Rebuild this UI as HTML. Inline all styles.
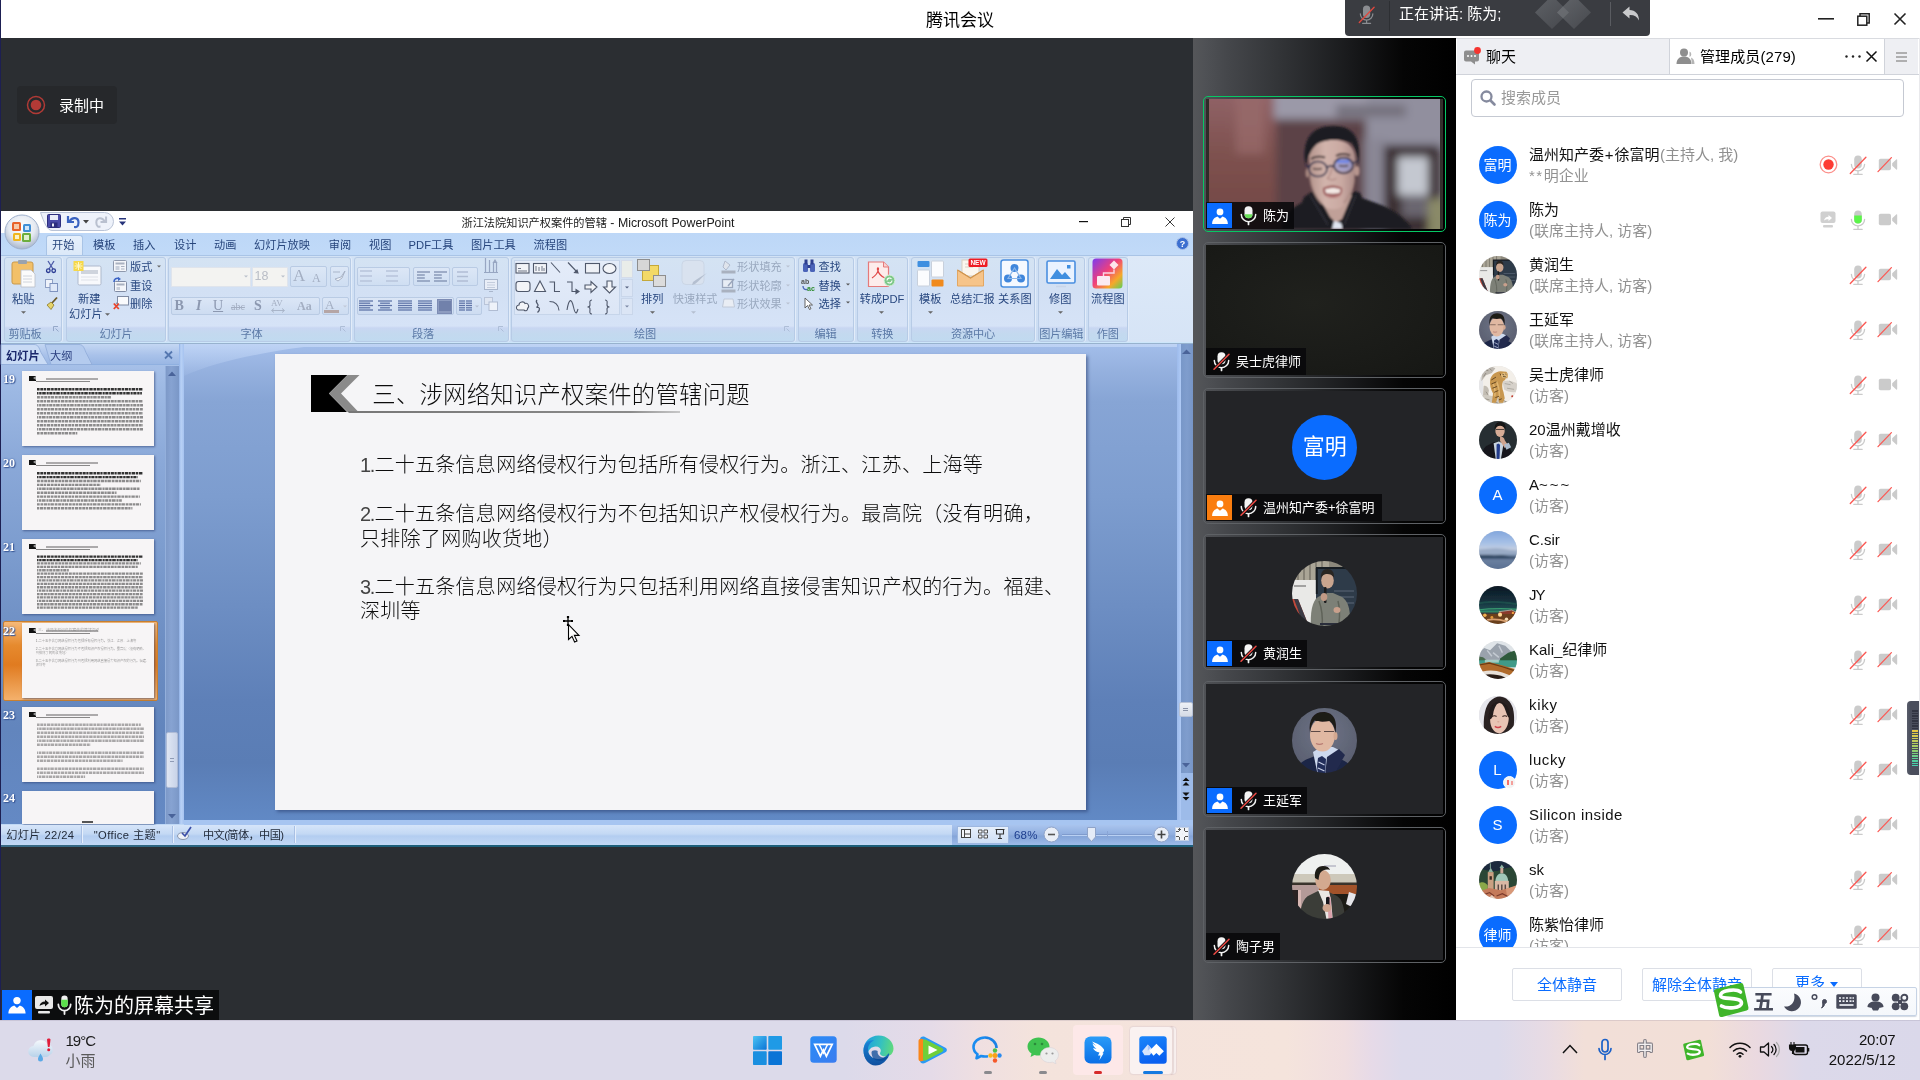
<!DOCTYPE html>
<html lang="zh-CN">
<head>
<meta charset="utf-8">
<title>腾讯会议</title>
<style>

*{box-sizing:border-box;margin:0;padding:0}
html,body{width:1920px;height:1080px;overflow:hidden;background:#2b2e32}
body{font-family:"Liberation Sans","Noto Sans CJK SC",sans-serif;font-size:14px;color:#000}
#root{position:relative;width:1920px;height:1080px;overflow:hidden;background:#2b2e32;will-change:transform}
.abs{position:absolute}
.t{position:absolute;white-space:nowrap;line-height:1}
svg{position:absolute;overflow:visible}
/* title bar */
#titlebar{position:absolute;left:0;top:0;width:1920px;height:38px;background:#fff}
#edge{position:absolute;left:0;top:0;width:1px;height:1020px;background:#1d1f52}
#speak{position:absolute;left:1345px;top:0;width:305px;height:35.5px;background:#3a3c41;border-radius:0 0 4px 4px}
#rec{position:absolute;left:17px;top:86px;width:100px;height:38px;background:#26282b;border-radius:4px}
/* share label */
#share{position:absolute;left:2px;top:990px;width:217px;height:30px;background:#0c0d0e}
#share .ub{position:absolute;left:0;top:0;width:30px;height:30px;background:#0a6cff}

#ppt{position:absolute;left:0;top:0;width:1193px;height:1080px}
.pf{font-size:11.2px}
.grp{position:absolute;top:257px;height:85px;border:1px solid #b7cbe6;border-radius:3px;box-shadow:1px 0 0 #e2ecf9;background:linear-gradient(#d4e3f3 0,#d2e0f4 40%,#d6e3f7 68px,#c8d6f2 70px,#c3d9ef 76px,#c1daf0 100%)}
.grp i{white-space:nowrap;letter-spacing:-.2px;position:absolute;left:0;right:0;bottom:-2px;height:17px;font-style:normal;text-align:center;font-size:11.2px;line-height:17px;color:#5b79a6}
.thumb{position:absolute;left:22px;width:132px;background:#f7f5f6;box-shadow:1px 1px 2px rgba(40,60,110,.6)}
.tn{position:absolute;left:3px;font-family:"Liberation Serif","Noto Serif CJK SC",serif;font-weight:bold;font-size:12px;line-height:12px;color:#fff;text-shadow:0 0 2px #3b5998,1px 1px 1px #3b5998}
.tl{position:absolute;height:1px;background:#555}
.slide-t{font-weight:300;color:#0c0c0c}
.dg{color:#444;letter-spacing:-1.3px;margin-right:.3px}

#vstrip{position:absolute;left:1193px;top:38px;width:263px;height:982px;background:linear-gradient(90deg,#555659 0,#505256 4%,#45474b 13%,#303235 35%,#18191b 60%,#050505 80%,#000 100%)}
.tile{position:absolute;left:1203px;width:243px;height:136px;border:1px solid #5e6165;border-radius:5px}
.tile .in{position:absolute;left:2px;top:2px;right:2px;bottom:2px;background:#232427;overflow:hidden}
.tile .lab{position:absolute;left:2px;bottom:2px;height:27.5px;background:rgba(8,8,10,.88);color:#fff;font-size:13px;line-height:27px;white-space:nowrap}
.tile .ub{position:absolute;left:1px;top:1.5px;width:25px;height:25px}
.av{position:absolute;border-radius:50%;overflow:hidden}

#panel{position:absolute;left:1456px;top:38px;width:464px;height:982px;background:#fff;overflow:hidden}
.row{position:absolute;left:0;width:464px;height:55px}
.row .a{position:absolute;left:22.500px;top:8.500px;width:38px;height:38px;border-radius:50%;overflow:hidden;background:#0a6cff;color:#fff;text-align:center;line-height:38px;font-size:14px;white-space:nowrap}
.row .n{position:absolute;left:73px;top:7px;font-size:15px;line-height:20px;color:#111;white-space:nowrap}
.row .n b{font-weight:normal;color:#8f8f8f}
.row .s{position:absolute;left:73px;top:28px;font-size:15px;line-height:20px;color:#929292;white-space:nowrap}
.btn{position:absolute;top:930px;height:33px;border:1px solid #dcdfe6;border-radius:2px;background:#fff;color:#0a6cff;font-size:15px;line-height:31px;text-align:center;white-space:nowrap}

#task{position:absolute;left:0;top:1020px;width:1920px;height:60px;background:linear-gradient(90deg,#dcdaea 0,#dcdaea 44%,#e5dbe8 48.5%,#efdfe1 51%,#f4e3dc 54%,#f5e4dc 67%,#f0dee0 70%,#e6dae8 71.5%,#dddaeb 73%,#dcdaeb 78%,#e8dbe4 80.5%,#f2dfd8 82.5%,#f2dfd7 89%,#ead9e0 91.5%,#dcd9ea 94%,#dad8ea 100%);box-shadow:inset 0 1px 0 rgba(120,110,140,.18)}
#ime{position:absolute;left:1727px;top:987px;width:190px;height:29px;background:linear-gradient(#fbfcfe,#f4f7fb);border:1px solid #c6d3e5;border-radius:2px;box-shadow:0 1px 1px rgba(120,140,170,.35)}
.ti{position:absolute;top:1035px;width:30px;height:30px}

</style>
</head>
<body>
<div id="root">

<div id="titlebar">
  <div class="t" style="left:926px;top:12px;font-size:17px;color:#000">腾讯会议</div>
  <svg style="left:1818px;top:18px" width="16" height="2" viewBox="0 0 16 2"><rect width="16" height="1.6" fill="#222"/></svg>
  <svg style="left:1857px;top:13px" width="13" height="13" viewBox="0 0 13 13"><path d="M3 3V0.8h9.2V10H10" fill="none" stroke="#222" stroke-width="1.5"/><rect x="0.8" y="3.2" width="9" height="9" fill="none" stroke="#222" stroke-width="1.5"/></svg>
  <svg style="left:1894px;top:13px" width="12" height="12" viewBox="0 0 12 12"><path d="M0.5 0.5L11.5 11.5M11.5 0.5L0.5 11.5" stroke="#222" stroke-width="1.6"/></svg>
</div>
<div id="speak">
  <svg style="left:14.4px;top:4.5px" width="15.2" height="19.0" viewBox="0 0 16 20" ><rect x="4.2" y="0.6" width="7.6" height="13" rx="3.8" fill="#8b8d91"/><path d="M1.4 9.300a6.600 6.600 0 0 0 13.200 0" fill="none" stroke="#8b8d91" stroke-width="1.300" stroke-linecap="round"/><path d="M8 16.200v3M3.800 19.300h8.400" fill="none" stroke="#8b8d91" stroke-width="1.300" stroke-linecap="round"/><path d="M0.300 18.400L15.900 2.300" stroke="#e0483f" stroke-width="1.400" stroke-linecap="round"/></svg>
  <div class="abs" style="left:44px;top:1px;width:1px;height:30px;background:#2d2f33"></div>
  <div class="t" style="left:54px;top:6px;font-size:15px;color:#fff">正在讲话: 陈为;</div>
  <svg style="left:188px;top:0" width="62" height="30" viewBox="0 0 62 30"><defs><linearGradient id="wm" x1="0" y1="0" x2="1" y2="1"><stop offset="0" stop-color="#63666b"/><stop offset="1" stop-color="#47494e"/></linearGradient></defs><path d="M2 12.500L14.500 0h9L36 12.500 19 29z" fill="url(#wm)" opacity=".85"/><path d="M24 12.500L36.500 0h9L58 12.500 41 29z" fill="url(#wm)" opacity=".95"/><path d="M24 12.500l6-6 6 6-6 5.800z" fill="#6d7075" opacity=".7"/></svg>
  <div class="abs" style="left:265px;top:2px;width:1px;height:24px;background:#5a5c61"></div>
  <svg style="left:277px;top:6px" width="18" height="16" viewBox="0 0 18 16"><path d="M7.5 0.500L0.5 6.500l7 6V9c4.5-.2 7.5 1.5 9.5 5.500C17 8 13.5 4.2 7.5 4z" fill="#c9cacc"/></svg>
</div>
<div id="rec">
  <svg style="left:9px;top:9px" width="20" height="20" viewBox="0 0 20 20"><circle cx="10" cy="10" r="8.5" fill="none" stroke="#b03a36" stroke-width="1.5"/><circle cx="10" cy="10" r="5.3" fill="#b23a36"/></svg>
  <div class="t" style="left:42px;top:12px;font-size:15px;color:#fff">录制中</div>
</div>
<div id="share">
  <div class="ub"><svg style="left:3px;top:3px" width="24" height="24" viewBox="0 0 24 24" ><circle cx="12" cy="7.6" r="3.7" fill="#fff"/><path d="M3.4 20.6c0-4.6 2.6-7.2 5.8-8.1l2.8 2.4 2.8-2.4c3.200 .9 5.800 3.500 5.800 8.100z" fill="#fff"/></svg></div>
  <svg style="left:33px;top:5px" width="18" height="20" viewBox="0 0 18 20"><rect x="0" y="1" width="18" height="13" rx="2" fill="#e9e9e9"/><rect x="3" y="16" width="12" height="2.5" rx="1" fill="#e9e9e9"/><path d="M4.5 11c.5-3 2.5-4.5 5.5-4.500V4.500l4 3.5-4 3.500V9.300c-2.3 0-3.8.5-5.5 1.700z" fill="#111"/></svg>
  <svg style="left:54px;top:4px" width="17" height="22" viewBox="0 0 16 20"><rect x="5" y="1" width="6" height="11" rx="3" fill="#f0f0f0"/><path d="M5 5h6v4a3 3 0 0 1-6 0z" fill="#5be04b"/><path d="M2.2 9.500a5.8 5.8 0 0 0 11.6 0" fill="none" stroke="#f0f0f0" stroke-width="1.7" stroke-linecap="round"/><path d="M8 15.500v3" fill="none" stroke="#f0f0f0" stroke-width="1.7" stroke-linecap="round"/></svg>
  <div class="t" style="left:72px;top:6px;font-size:20px;color:#fff">陈为的屏幕共享</div>
</div>
<div id="edge"></div>

<div id="ppt">
<div class="abs " style="left:1px;top:211px;width:1192px;height:636px;background:#bfd8f5"></div>
<div class="abs " style="left:1px;top:211px;width:1192px;height:22px;background:#fff"></div>
<svg style="left:40px;top:212px" width="76" height="20" viewBox="0 0 76 20"><path d="M0.5 0.500H64.500a9 9 0 0 1 0 18H12C7 18.5 4 10 0.5 0.500z" fill="#eef2fa" stroke="#b9c3d6" stroke-width="1"/></svg>
<svg style="left:47px;top:214px" width="14" height="14" viewBox="0 0 14 14"><rect x="0.5" y="0.5" width="13" height="13" rx="1" fill="#4a4ba8" stroke="#2d2e7d"/><rect x="3" y="1" width="8" height="5" fill="#e9ecf8"/><rect x="3.5" y="8.5" width="7" height="5" fill="#2d2e7d"/><rect x="5" y="9.5" width="2" height="3" fill="#e9ecf8"/></svg>
<svg style="left:67px;top:215px" width="14" height="13" viewBox="0 0 14 13"><path d="M1 1v6h6" fill="none" stroke="#3a63c0" stroke-width="2.2"/><path d="M2.5 6.500C5 1.5 11.5 2 11.5 7.500S8 12 7 12" fill="none" stroke="#3a63c0" stroke-width="2.2"/></svg>
<svg style="left:83px;top:220px" width="6" height="4" viewBox="0 0 6 4"><path d="M0 0h6L3 3.500z" fill="#444"/></svg>
<svg style="left:94px;top:215px" width="13" height="13" viewBox="0 0 14 13"><path d="M13 1v6H7" fill="none" stroke="#b9c0cf" stroke-width="2.2"/><path d="M11.5 6.500C9 1.5 2.5 2 2.5 7.500S6 12 7 12" fill="none" stroke="#b9c0cf" stroke-width="2.2"/></svg>
<svg style="left:119px;top:218px" width="7" height="8" viewBox="0 0 7 8"><rect x="0" y="0" width="7" height="1.5" fill="#26337a"/><path d="M0 3.500h7L3.5 7.500z" fill="#26337a"/></svg>
<div class="t ptitle" style="left:498px;top:216.12px;width:200px;text-align:center;font-size:11.2px;line-height:14.56px;color:#1a1a1a;font-size:11.2px;width:400px;margin-left:-100px;letter-spacing:0px">浙江法院知识产权案件的管辖<span style="font-size:12.35px"> - Microsoft PowerPoint</span></div>
<svg style="left:1079px;top:221px" width="9" height="2" viewBox="0 0 9 2"><rect width="9" height="1.2" fill="#111"/></svg>
<svg style="left:1121px;top:217px" width="10" height="10" viewBox="0 0 10 10"><path d="M2.5 2.500V0.500h7v7h-2" fill="none" stroke="#333" stroke-width="1"/><rect x="0.5" y="2.5" width="7" height="7" fill="none" stroke="#333" stroke-width="1"/></svg>
<svg style="left:1165px;top:217px" width="10" height="10" viewBox="0 0 10 10"><path d="M0.5 0.500l9 9M9.5 0.500l-9 9" stroke="#222" stroke-width="0.9"/></svg>
<div class="abs " style="left:1px;top:233px;width:1192px;height:22px;background:linear-gradient(#bdd7f7,#c1daf8)"></div>
<div class="abs " style="left:45.5px;top:234.5px;width:37.0px;height:21.5px;background:linear-gradient(#e6f0fc,#dbe8f8);border:1px solid #a9c4e6;border-bottom:none;border-radius:3px 3px 0 0"></div>
<div class="t " style="left:52px;top:238.12px;font-size:11.2px;line-height:14.56px;color:#27457c;">开始</div>
<div class="t " style="left:93px;top:238.12px;font-size:11.2px;line-height:14.56px;color:#27457c;">模板</div>
<div class="t " style="left:133px;top:238.12px;font-size:11.2px;line-height:14.56px;color:#27457c;">插入</div>
<div class="t " style="left:174px;top:238.12px;font-size:11.2px;line-height:14.56px;color:#27457c;">设计</div>
<div class="t " style="left:214px;top:238.12px;font-size:11.2px;line-height:14.56px;color:#27457c;">动画</div>
<div class="t " style="left:254px;top:238.12px;font-size:11.2px;line-height:14.56px;color:#27457c;">幻灯片放映</div>
<div class="t " style="left:328.8px;top:238.12px;font-size:11.2px;line-height:14.56px;color:#27457c;">审阅</div>
<div class="t " style="left:369px;top:238.12px;font-size:11.2px;line-height:14.56px;color:#27457c;">视图</div>
<div class="t " style="left:408.6px;top:238.12px;font-size:11.2px;line-height:14.56px;color:#27457c;">PDF工具</div>
<div class="t " style="left:471px;top:238.12px;font-size:11.2px;line-height:14.56px;color:#27457c;">图片工具</div>
<div class="t " style="left:533.6px;top:238.12px;font-size:11.2px;line-height:14.56px;color:#27457c;">流程图</div>
<svg style="left:1176px;top:237px" width="13" height="13" viewBox="0 0 13 13"><circle cx="6.5" cy="6.5" r="6" fill="#3c6fd0" stroke="#a9c0e8" stroke-width="1"/><text x="6.5" y="10" font-size="9" font-weight="bold" fill="#fff" text-anchor="middle" font-family="Liberation Sans, sans-serif">?</text></svg>
<div class="abs " style="left:1px;top:255px;width:1192px;height:88px;background:linear-gradient(#d2e2f5,#cfdff4 60%,#c9dcf3);border-top:1px solid #a9c4e6"></div>
<div class="abs " style="left:1128px;top:256px;width:65px;height:87px;background:linear-gradient(#dde9f8,#d6e4f6)"></div>
<div class="grp" style="left:4px;width:58px"><i style="padding-right:16px">剪贴板</i></div>
<div class="grp" style="left:66px;width:100px"><i style="">幻灯片</i></div>
<div class="grp" style="left:168px;width:183px"><i style="padding-right:16px">字体</i></div>
<div class="grp" style="left:353.5px;width:155.0px"><i style="padding-right:16px">段落</i></div>
<div class="grp" style="left:511px;width:284px"><i style="padding-right:16px">绘图</i></div>
<div class="grp" style="left:797.5px;width:56.0px"><i style="">编辑</i></div>
<div class="grp" style="left:856.5px;width:51.5px"><i style="">转换</i></div>
<div class="grp" style="left:911px;width:124px"><i style="">资源中心</i></div>
<div class="grp" style="left:1038px;width:46.5px"><i style="">图片编辑</i></div>
<div class="grp" style="left:1087.5px;width:40.5px"><i style="">作图</i></div>
<svg style="left:4px;top:214px" width="36" height="36" viewBox="0 0 36 36"><defs><radialGradient id="orb" cx="50%" cy="35%" r="65%"><stop offset="0" stop-color="#ffffff"/><stop offset="0.6" stop-color="#e4e9f1"/><stop offset="1" stop-color="#a9b6cc"/></radialGradient></defs><circle cx="18" cy="18" r="17" fill="url(#orb)" stroke="#9fb0cc" stroke-width="1"/><rect x="8" y="8" width="9" height="9" rx="1.5" fill="#e8622a"/><rect x="10" y="10" width="5" height="5" fill="#f6c9a8"/><rect x="19" y="10" width="8" height="8" rx="1.5" fill="#3f8fd6"/><rect x="21" y="12" width="4" height="4" fill="#cfe4f8"/><rect x="9" y="19" width="8" height="8" rx="1.5" fill="#f0b51d"/><rect x="11" y="21" width="4" height="4" fill="#fdf1c3"/><rect x="18" y="19" width="9" height="9" rx="1.5" fill="#6cae3e"/><rect x="20" y="21" width="5" height="5" fill="#dff0cf"/></svg>
<svg style="left:11px;top:259px" width="26" height="29" viewBox="0 0 26 29"><rect x="1" y="3" width="21" height="22" rx="2" fill="#f2c069" stroke="#c9994a"/><rect x="7" y="1" width="9" height="4" rx="1" fill="#9aa2ad"/><path d="M10 11h10l4 4v13H10z" fill="#fbfbfb" stroke="#b9bec8" stroke-width="0.8"/><path d="M12 17h9M12 20h9M12 23h9" stroke="#d0d4dc" stroke-width="1"/></svg>
<div class="t " style="left:12px;top:292.12px;font-size:11.2px;line-height:14.56px;color:#28477f;">粘贴</div>
<svg style="left:21.0px;top:311.0px" width="5" height="3" viewBox="0 0 6 3"><path d="M0 0h6L3 3z" fill="#666"/></svg>
<svg style="left:46px;top:261px" width="10" height="12" viewBox="0 0 10 12"><path d="M2 0l5 8M8 0L3 8" stroke="#4d5ba8" stroke-width="1.3"/><circle cx="2.3" cy="9.700" r="1.800" fill="none" stroke="#2c3c94" stroke-width="1.300"/><circle cx="7.700" cy="9.700" r="1.800" fill="none" stroke="#2c3c94" stroke-width="1.300"/></svg>
<svg style="left:45px;top:279px" width="13" height="13" viewBox="0 0 13 13"><rect x="0.5" y="0.5" width="7" height="8" fill="#eef2fa" stroke="#8fa0c4"/><rect x="5" y="4.500" width="7.500" height="8" fill="#dfe8f8" stroke="#7f93bf"/></svg>
<svg style="left:46px;top:297px" width="12" height="13" viewBox="0 0 12 13"><path d="M11 0.500L6 6" stroke="#6b5a2a" stroke-width="1.800"/><path d="M1 8l4-3 3 3-3 4.500z" fill="#e6d36a" stroke="#8a7a2a" stroke-width="0.800"/></svg>
<svg style="left:53px;top:326px" width="6" height="6" viewBox="0 0 6 6"><path d="M0.5 5V0.500H5M2.500 2.500l3 3" fill="none" stroke="#8fa3c4" stroke-width="0.900"/></svg>
<svg style="left:73px;top:260px" width="29" height="27" viewBox="0 0 29 27"><rect x="5" y="6" width="23" height="19" rx="1.500" fill="#f8f9fc" stroke="#aeb9cc"/><rect x="8" y="10" width="17" height="4" fill="#cfd4dd"/><path d="M8 17h17M8 20h17" stroke="#dde1e8" stroke-width="1.200"/><rect x="0.500" y="1" width="10" height="10" fill="#f6d84a"/><path d="M5.500 2v8M1.500 6h8M2.500 3l6 6M8.500 3l-6 6" stroke="#fff7c8" stroke-width="1"/></svg>
<div class="t " style="left:78px;top:292.12px;font-size:11.2px;line-height:14.56px;color:#28477f;">新建</div>
<div class="t " style="left:69px;top:307.12px;font-size:11.2px;line-height:14.56px;color:#28477f;">幻灯片</div>
<svg style="left:104.5px;top:313.0px" width="5" height="3" viewBox="0 0 6 3"><path d="M0 0h6L3 3z" fill="#666"/></svg>
<div class="t " style="left:130px;top:260.12px;font-size:11.2px;line-height:14.56px;color:#28477f;">版式</div>
<div class="t " style="left:130px;top:278.82px;font-size:11.2px;line-height:14.56px;color:#28477f;">重设</div>
<div class="t " style="left:130px;top:296.82px;font-size:11.2px;line-height:14.56px;color:#28477f;">删除</div>
<svg style="left:156.5px;top:264.5px" width="4" height="3" viewBox="0 0 6 3"><path d="M0 0h6L3 3z" fill="#666"/></svg>
<svg style="left:113px;top:260px" width="14" height="12" viewBox="0 0 14 12"><rect x="0.5" y="0.500" width="13" height="11" rx="1" fill="#f4f6fa" stroke="#8e99ad"/><rect x="2.500" y="2.500" width="9" height="2" fill="#a9b1c0"/><rect x="2.500" y="6" width="4" height="4" fill="#c8cfdb"/><path d="M8 6.500h3.500M8 9h3.500" stroke="#a9b1c0"/></svg>
<svg style="left:113px;top:277px" width="15" height="15" viewBox="0 0 15 15"><rect x="1.500" y="4.500" width="12" height="10" rx="1" fill="#f4f6fa" stroke="#7f8ba3"/><rect x="3.500" y="6.500" width="8" height="2" fill="#a9b1c0"/><rect x="3.500" y="10" width="3.500" height="3" fill="#c8cfdb"/><path d="M1 5C1 2 3 0.800 6 1.500" fill="none" stroke="#3a62c4" stroke-width="1.600"/><path d="M5 0l3 2-3 2z" fill="#3a62c4"/></svg>
<svg style="left:113px;top:296px" width="16" height="14" viewBox="0 0 16 14"><rect x="4.500" y="0.500" width="11" height="8.500" fill="#fafbfd" stroke="#7f8ba3"/><path d="M4.500 6l-2 2.500" stroke="#7f8ba3"/><path d="M0.800 7.500l5 5.500M5.800 7.500l-5 5.500" stroke="#e8432a" stroke-width="1.800"/></svg>
<div class="abs " style="left:170.5px;top:266.5px;width:80.5px;height:20.5px;background:#f3f3f1;border:1px solid #dfe4ec"></div>
<div class="abs " style="left:251.5px;top:266.5px;width:36.0px;height:20.5px;background:#f3f3f1;border:1px solid #dfe4ec"></div>
<svg style="left:244.0px;top:275.0px" width="4" height="3" viewBox="0 0 6 3"><path d="M0 0h6L3 3z" fill="#b9bfca"/></svg>
<svg style="left:280.5px;top:275.0px" width="4" height="3" viewBox="0 0 6 3"><path d="M0 0h6L3 3z" fill="#b9bfca"/></svg>
<div class="t " style="left:254.5px;top:268.18px;font-size:12.5px;line-height:16.25px;color:#b9bdc6;">18</div>
<div class="abs " style="left:290px;top:266px;width:37px;height:21px;border:1px solid #b9cbe4;border-radius:2px;background:linear-gradient(#dce7f6,#cfdef2)"></div>
<div class="abs " style="left:329.5px;top:266px;width:19.5px;height:21px;border:1px solid #b9cbe4;border-radius:2px;background:linear-gradient(#dce7f6,#cfdef2)"></div>
<div class="t" style="left:293px;top:266px;font-family:'Liberation Serif',serif;font-size:17px;line-height:20px;color:#a3aec2">A</div>
<div class="t" style="left:312px;top:271px;font-family:'Liberation Serif',serif;font-size:12px;line-height:14px;color:#a3aec2">A</div>
<svg style="left:332px;top:269px" width="15" height="14" viewBox="0 0 15 14"><path d="M3 10l6-2 4-6-3 7-4 3z" fill="#eef2f8" stroke="#a3aec2" stroke-width="0.900"/><path d="M1 3h7" stroke="#a9b5c9" stroke-width="1"/></svg>
<div class="abs " style="left:170.5px;top:297px;width:149.0px;height:18px;border:1px solid #b9cbe4;border-radius:2px;background:linear-gradient(#dbe6f6,#cddcf1)"></div>
<div class="abs " style="left:321.5px;top:297px;width:27.5px;height:18px;border:1px solid #b9cbe4;border-radius:2px;background:linear-gradient(#dbe6f6,#cddcf1)"></div>
<div class="t" style="left:174.5px;top:297.6px;font-family:'Liberation Serif',serif;font-size:14px;line-height:16.8px;color:#8c98b0;font-weight:bold">B</div>
<div class="t" style="left:196px;top:297.6px;font-family:'Liberation Serif',serif;font-size:14px;line-height:16.8px;color:#8c98b0;font-style:italic;font-weight:bold">I</div>
<div class="t" style="left:213px;top:297.6px;font-family:'Liberation Serif',serif;font-size:14px;line-height:16.8px;color:#8c98b0;text-decoration:underline">U</div>
<div class="t" style="left:231px;top:300.5px;font-family:'Liberation Serif',serif;font-size:10px;line-height:12.0px;color:#a3aec2;text-decoration:line-through">abc</div>
<div class="t" style="left:254px;top:297.6px;font-family:'Liberation Serif',serif;font-size:14px;line-height:16.8px;color:#8c98b0;font-weight:bold">S</div>
<div class="t" style="left:271px;top:297.6px;font-family:'Liberation Serif',serif;font-size:9px;line-height:10.8px;color:#a3aec2;">AV</div>
<svg style="left:271px;top:308px" width="14" height="5" viewBox="0 0 14 5"><path d="M1 2.500h12M3 0.500l-2.500 2 2.500 2M11 0.500l2.500 2-2.500 2" fill="none" stroke="#a9b5c9" stroke-width="1"/></svg>
<div class="t" style="left:297px;top:299.3px;font-family:'Liberation Serif',serif;font-size:12px;line-height:14.4px;color:#a3aec2;font-weight:bold">Aa</div>
<div class="t" style="left:325px;top:296.7px;font-family:'Liberation Serif',serif;font-size:13px;line-height:15.6px;color:#a3aec2;">A</div>
<div class="abs " style="left:324px;top:310px;width:15px;height:3px;background:#b5a5a5"></div>
<svg style="left:342.5px;top:304.5px" width="4" height="3" viewBox="0 0 6 3"><path d="M0 0h6L3 3z" fill="#c2cad8"/></svg>
<svg style="left:340px;top:326px" width="6" height="6" viewBox="0 0 6 6"><path d="M0.5 5V0.500H5M2.500 2.500l3 3" fill="none" stroke="#a9bad4" stroke-width="0.900"/></svg>
<div class="abs " style="left:356.5px;top:267px;width:53.0px;height:19px;border:1px solid #b9cbe4;border-radius:2px;background:linear-gradient(#dce7f6,#cfdef2)"></div>
<div class="abs " style="left:412.5px;top:267px;width:37.0px;height:19px;border:1px solid #b9cbe4;border-radius:2px;background:linear-gradient(#dce7f6,#cfdef2)"></div>
<div class="abs " style="left:452px;top:267px;width:26px;height:19px;border:1px solid #b9cbe4;border-radius:2px;background:linear-gradient(#dce7f6,#cfdef2)"></div>
<svg style="left:360px;top:270px" width="12" height="12" viewBox="0 0 12 12"><path d="M0 1.0H12.0" stroke="#b9c6dc" stroke-width="1.6"/><path d="M0 6.0H12.0" stroke="#b9c6dc" stroke-width="1.6"/><path d="M0 11.0H12.0" stroke="#b9c6dc" stroke-width="1.6"/></svg>
<svg style="left:386px;top:270px" width="12" height="12" viewBox="0 0 12 12"><path d="M0 1.0H12.0" stroke="#b9c6dc" stroke-width="1.6"/><path d="M0 6.0H12.0" stroke="#b9c6dc" stroke-width="1.6"/><path d="M0 11.0H12.0" stroke="#b9c6dc" stroke-width="1.6"/></svg>
<svg style="left:417px;top:271px" width="13" height="11" viewBox="0 0 13 11"><path d="M0 1.0H13" stroke="#8494b4" stroke-width="1.4"/><path d="M0 4.0H7.8" stroke="#8494b4" stroke-width="1.4"/><path d="M0 7.0H7.8" stroke="#8494b4" stroke-width="1.4"/><path d="M0 10.0H13" stroke="#8494b4" stroke-width="1.4"/></svg>
<svg style="left:434px;top:271px" width="13" height="11" viewBox="0 0 13 11"><path d="M0 1.0H13" stroke="#8494b4" stroke-width="1.4"/><path d="M0 4.0H7.8" stroke="#8494b4" stroke-width="1.4"/><path d="M0 7.0H7.8" stroke="#8494b4" stroke-width="1.4"/><path d="M0 10.0H13" stroke="#8494b4" stroke-width="1.4"/></svg>
<svg style="left:457px;top:271px" width="11" height="11" viewBox="0 0 11 11"><path d="M0 1.0H11.0" stroke="#b0bdd4" stroke-width="1.5"/><path d="M0 5.5H11.0" stroke="#b0bdd4" stroke-width="1.5"/><path d="M0 10.0H11.0" stroke="#b0bdd4" stroke-width="1.5"/></svg>
<svg style="left:484px;top:258px" width="14" height="16" viewBox="0 0 14 16"><path d="M1.500 0v14M5.500 2v12M9.500 4v10M12.500 4v10M0 14.500h14" stroke="#97a6c2" stroke-width="1.200" fill="none"/><path d="M11 1l2.500 4h-5z" fill="#97a6c2"/></svg>
<svg style="left:484px;top:279px" width="14" height="13" viewBox="0 0 14 13"><rect x="0.5" y="0.500" width="13" height="10" fill="#e9eef7" stroke="#a9b6cc"/><path d="M3 3.500h8M3 6h8M3 8.500h8" stroke="#c4cddd"/><path d="M5 12.500h4" stroke="#a9b6cc"/></svg>
<svg style="left:484px;top:297px" width="14" height="14" viewBox="0 0 14 14"><rect x="0.5" y="0.500" width="8" height="7" fill="#dfe6f2" stroke="#b9c4d8"/><rect x="5" y="5" width="8.500" height="8.500" fill="#eef2f9" stroke="#b0bcd2"/></svg>
<div class="abs " style="left:356.5px;top:296.5px;width:97.0px;height:18.5px;border:1px solid #b9cbe4;border-radius:2px;background:linear-gradient(#dbe6f6,#cddcf1)"></div>
<div class="abs " style="left:455.5px;top:296.5px;width:26.0px;height:18.5px;border:1px solid #b9cbe4;border-radius:2px;background:linear-gradient(#dbe6f6,#cddcf1)"></div>
<svg style="left:358.5px;top:300px" width="14" height="11" viewBox="0 0 14 11"><path d="M0 1.0H14" stroke="#5f74a8" stroke-width="1.3"/><path d="M0 3.2H11.2" stroke="#5f74a8" stroke-width="1.3"/><path d="M0 5.5H14" stroke="#5f74a8" stroke-width="1.3"/><path d="M0 7.8H11.2" stroke="#5f74a8" stroke-width="1.3"/><path d="M0 10.0H14" stroke="#5f74a8" stroke-width="1.3"/></svg>
<svg style="left:378px;top:300px" width="14" height="11" viewBox="0 0 14 11"><path d="M0.0 1.0H14.0" stroke="#5f74a8" stroke-width="1.3"/><path d="M2.1 3.2H11.9" stroke="#5f74a8" stroke-width="1.3"/><path d="M0.0 5.5H14.0" stroke="#5f74a8" stroke-width="1.3"/><path d="M2.1 7.8H11.9" stroke="#5f74a8" stroke-width="1.3"/><path d="M0.0 10.0H14.0" stroke="#5f74a8" stroke-width="1.3"/></svg>
<svg style="left:398px;top:300px" width="14" height="11" viewBox="0 0 14 11"><path d="M0 1.0H14" stroke="#5f74a8" stroke-width="1.3"/><path d="M0 3.2H14" stroke="#5f74a8" stroke-width="1.3"/><path d="M0 5.5H14" stroke="#5f74a8" stroke-width="1.3"/><path d="M0 7.8H14" stroke="#5f74a8" stroke-width="1.3"/><path d="M0 10.0H14" stroke="#5f74a8" stroke-width="1.3"/></svg>
<svg style="left:418px;top:300px" width="14" height="11" viewBox="0 0 14 11"><path d="M0 1.0H14" stroke="#5f74a8" stroke-width="1.3"/><path d="M0 3.2H14" stroke="#5f74a8" stroke-width="1.3"/><path d="M0 5.5H14" stroke="#5f74a8" stroke-width="1.3"/><path d="M0 7.8H14" stroke="#5f74a8" stroke-width="1.3"/><path d="M0 10.0H14" stroke="#5f74a8" stroke-width="1.3"/></svg>
<div class="abs " style="left:437px;top:298.5px;width:15px;height:15.0px;background:#8d9cc0;border:1px solid #7d8cb4"></div>
<svg style="left:438.5px;top:301px" width="12" height="10" viewBox="0 0 12 10"><path d="M0 1.0H12.0" stroke="#5f6f9c" stroke-width="1.2"/><path d="M0 3.0H12.0" stroke="#5f6f9c" stroke-width="1.2"/><path d="M0 5.0H12.0" stroke="#5f6f9c" stroke-width="1.2"/><path d="M0 7.0H12.0" stroke="#5f6f9c" stroke-width="1.2"/><path d="M0 9.0H12.0" stroke="#5f6f9c" stroke-width="1.2"/></svg>
<svg style="left:458.5px;top:300px" width="13" height="11" viewBox="0 0 13 11"><path d="M0 1.0H13.0" stroke="#5f74a8" stroke-width="1.3"/><path d="M0 3.2H13.0" stroke="#5f74a8" stroke-width="1.3"/><path d="M0 5.5H13.0" stroke="#5f74a8" stroke-width="1.3"/><path d="M0 7.8H13.0" stroke="#5f74a8" stroke-width="1.3"/><path d="M0 10.0H13.0" stroke="#5f74a8" stroke-width="1.3"/></svg>
<div class="abs " style="left:464.5px;top:299.5px;width:1.2px;height:12.5px;background:#cddcf1"></div>
<svg style="left:474.5px;top:304.5px" width="4" height="3" viewBox="0 0 6 3"><path d="M0 0h6L3 3z" fill="#b6c1d4"/></svg>
<svg style="left:498px;top:326px" width="6" height="6" viewBox="0 0 6 6"><path d="M0.5 5V0.500H5M2.500 2.500l3 3" fill="none" stroke="#a9bad4" stroke-width="0.900"/></svg>
<div class="abs " style="left:513.5px;top:259.5px;width:106.0px;height:55.5px;border:1px solid #c6d5ea;background:linear-gradient(#e4ecf9,#dce6f6)"></div>
<div class="abs " style="left:620.5px;top:259.5px;width:12.0px;height:18.5px;border:1px solid #d4dcea;background:#e9ede9"></div>
<div class="abs " style="left:620.5px;top:279px;width:12.0px;height:17.5px;border:1px solid #c9d6ea;background:#dbe5f5"></div>
<div class="abs " style="left:620.5px;top:297.5px;width:12.0px;height:17.5px;border:1px solid #c9d6ea;background:#dbe5f5"></div>
<svg style="left:624.5px;top:286.0px" width="4" height="3" viewBox="0 0 6 3"><path d="M0 0h6L3 3z" fill="#55617e"/></svg>
<svg style="left:624.5px;top:305.0px" width="4" height="3" viewBox="0 0 6 3"><path d="M0 0h6L3 3z" fill="#7a86a3"/></svg>
<svg style="left:514px;top:260px" width="106" height="56" viewBox="0 0 106 56" fill="none" stroke="#4f586b" stroke-width="1.1"><rect x="2" y="3.500" width="13" height="9.500" fill="#f2f4f8"/><path d="M4 8.500h3M4 11h9" stroke-width="0.8"/><rect x="19.500" y="3.500" width="13" height="9.500" fill="#f2f4f8"/><path d="M22 11V6M25 11V7M28 11V6M30 11V8" stroke-width="0.800"/><path d="M37 2.500l9 10"/><path d="M54 2.500l9.500 10"/><path d="M64 13l-3.500-.5 2.500-2.500z" fill="#4f586b"/><rect x="71.500" y="3.500" width="14" height="9.500" fill="#eef1f6"/><ellipse cx="95.500" cy="8.500" rx="6.500" ry="5" fill="#f2f4f8"/><rect x="2" y="21.500" width="14" height="10" rx="2.500" fill="#f2f4f8"/><path d="M26 21l5.500 10.500h-11z" fill="#f2f4f8"/><path d="M35.500 22h5v9.500h5.500"/><path d="M53 22h5v9.500h5"/><path d="M65 31.500l-3-2v4z" fill="#4f586b"/><path d="M71 25h6v-3.500l6 5.500-6 5.500V29h-6z" fill="#f2f4f8"/><path d="M93 21h5v6h3.500l-6 6-6-6H93z" fill="#f2f4f8"/><path d="M4 50c-2.500-1-2-5 1-5 0-3.500 5-4 6-1.500 3-1 5 3 2.500 5 .5 2-2 3-3.500 1.500z" fill="#f2f4f8"/><path d="M23 40c-3 3 4 4-.5 7.500 3.500-1 4 2.500 1 5" stroke-width="1.3"/><path d="M35.500 41.500c6 0 9 3.500 9.500 9"/><path d="M53 50c2-12 4.500-12 6.500-3s3.500 6 4.500 2"/><path d="M78 40c-3 0-2 3-2 5s-1.500 2-2.500 2c1 0 2.500 0 2.500 2s-1 5 2 5"/><path d="M91 40c3 0 2 3 2 5s1.500 2 2.500 2c-1 0-2.500 0-2.500 2s1 5-2 5"/></svg>
<svg style="left:637px;top:259px" width="30" height="29" viewBox="0 0 30 29"><rect x="5.500" y="6.500" width="16" height="15" fill="#f3d967" stroke="#c4a83a"/><rect x="0.500" y="0.500" width="12" height="11" fill="#d6d6d6" stroke="#8e8e8e"/><rect x="16.500" y="16.500" width="12" height="11" fill="#dcdcdc" stroke="#8e8e8e"/></svg>
<div class="t " style="left:641px;top:292.12px;font-size:11.2px;line-height:14.56px;color:#28477f;">排列</div>
<svg style="left:650.0px;top:311.0px" width="5" height="3" viewBox="0 0 6 3"><path d="M0 0h6L3 3z" fill="#666"/></svg>
<svg style="left:680px;top:260px" width="30" height="28" viewBox="0 0 30 28"><rect x="2" y="0.500" width="22" height="24" rx="4" fill="#d9e2ef" stroke="#cbd6e6"/><path d="M27 13c-4 3-8 8-12 11l-3 1 1-3c4-3 9-6 14-9z" fill="#b4bfd0"/></svg>
<div class="t " style="left:672.8px;top:292.12px;font-size:11.2px;line-height:14.56px;color:#9aa9bf;">快速样式</div>
<svg style="left:691.0px;top:311.0px" width="5" height="3" viewBox="0 0 6 3"><path d="M0 0h6L3 3z" fill="#b5bfd0"/></svg>
<div class="t " style="left:737px;top:260.12px;font-size:11.2px;line-height:14.56px;color:#9aa9bf;">形状填充</div>
<svg style="left:786.0px;top:265.0px" width="4" height="3" viewBox="0 0 6 3"><path d="M0 0h6L3 3z" fill="#b9c2d2"/></svg>
<div class="t " style="left:737px;top:278.82px;font-size:11.2px;line-height:14.56px;color:#9aa9bf;">形状轮廓</div>
<svg style="left:786.0px;top:283.7px" width="4" height="3" viewBox="0 0 6 3"><path d="M0 0h6L3 3z" fill="#b9c2d2"/></svg>
<div class="t " style="left:737px;top:296.82px;font-size:11.2px;line-height:14.56px;color:#9aa9bf;">形状效果</div>
<svg style="left:786.0px;top:301.7px" width="4" height="3" viewBox="0 0 6 3"><path d="M0 0h6L3 3z" fill="#b9c2d2"/></svg>
<svg style="left:721px;top:259px" width="15" height="15" viewBox="0 0 15 15"><path d="M4 2l5 4-4 5-3-3z" fill="#dfe4ec" stroke="#b0bacc"/><rect x="0.500" y="11.500" width="14" height="3" fill="#a9b1bf"/></svg>
<svg style="left:721px;top:278px" width="15" height="15" viewBox="0 0 15 15"><rect x="1.500" y="1.500" width="10" height="8" fill="#e8edf5" stroke="#9aa6bc" stroke-width="1.300"/><path d="M13 1L7 8" stroke="#9aa6bc" stroke-width="1.500"/><rect x="0.500" y="11.500" width="14" height="3" fill="#a9b1bf"/></svg>
<svg style="left:722px;top:297px" width="13" height="12" viewBox="0 0 13 12"><path d="M2 2h9l1.500 8h-12z" fill="#e9edf4" stroke="#c0c9d8"/></svg>
<svg style="left:784px;top:326px" width="6" height="6" viewBox="0 0 6 6"><path d="M0.5 5V0.500H5M2.500 2.500l3 3" fill="none" stroke="#a9bad4" stroke-width="0.900"/></svg>
<div class="t " style="left:818.6px;top:260.12px;font-size:11.2px;line-height:14.56px;color:#28477f;">查找</div>
<div class="t " style="left:818.6px;top:278.82px;font-size:11.2px;line-height:14.56px;color:#28477f;">替换</div>
<svg style="left:845.5px;top:283.2px" width="4" height="3" viewBox="0 0 6 3"><path d="M0 0h6L3 3z" fill="#555"/></svg>
<div class="t " style="left:818.6px;top:296.82px;font-size:11.2px;line-height:14.56px;color:#28477f;">选择</div>
<svg style="left:845.5px;top:301.2px" width="4" height="3" viewBox="0 0 6 3"><path d="M0 0h6L3 3z" fill="#555"/></svg>
<svg style="left:802px;top:259px" width="14" height="14" viewBox="0 0 14 14"><rect x="1" y="4" width="5" height="9" rx="1.500" fill="#4a63b8"/><rect x="8" y="4" width="5" height="9" rx="1.500" fill="#4a63b8"/><rect x="2.500" y="0.500" width="3" height="5" fill="#2d3f8f"/><rect x="8.500" y="0.500" width="3" height="5" fill="#2d3f8f"/><rect x="5.500" y="6" width="3" height="3" fill="#2d3f8f"/></svg>
<svg style="left:801px;top:278px" width="16" height="14" viewBox="0 0 16 14"><text x="0" y="6" font-size="7" font-weight="bold" fill="#555" font-family="Liberation Sans, sans-serif">ab</text><text x="6" y="13" font-size="7" font-weight="bold" fill="#2a8a2a" font-family="Liberation Sans, sans-serif">ac</text><path d="M2 8c0 3 2 4 4 3.500" fill="none" stroke="#4a63b8" stroke-width="1.300"/></svg>
<svg style="left:804px;top:297px" width="10" height="13" viewBox="0 0 10 13"><path d="M1 1v10l2.500-2.500 2 4 1.500-.8-2-3.700h3.500z" fill="#fff" stroke="#555" stroke-width="0.900"/></svg>
<svg style="left:867px;top:261px" width="30" height="27" viewBox="0 0 30 27"><path d="M1.500 1h15l5 5v19.500h-20z" fill="#fdeceb" stroke="#e57a7a" stroke-width="1.200"/><path d="M16.500 1v5h5" fill="#f9d2d0" stroke="#e57a7a" stroke-width="1"/><path d="M5 17c3-2 6-5 6.500-9 .2-1.500-1.500-1.500-1 .5 1 4 4 7 7.500 8.500" fill="none" stroke="#e04848" stroke-width="1.200"/><circle cx="22.500" cy="19.500" r="5.500" fill="#7fc98a" stroke="#dff2e2" stroke-width="1"/><path d="M20 19.500a2.500 2.500 0 0 1 4.500-1.500M25 19.500a2.500 2.500 0 0 1-4.500 1.500" fill="none" stroke="#fff" stroke-width="1.100"/></svg>
<div class="t " style="left:859.7px;top:292.12px;font-size:11.2px;line-height:14.56px;color:#28477f;">转成PDF</div>
<svg style="left:879.0px;top:311.0px" width="5" height="3" viewBox="0 0 6 3"><path d="M0 0h6L3 3z" fill="#666"/></svg>
<svg style="left:917px;top:260px" width="28" height="28" viewBox="0 0 28 28"><rect x="0.500" y="1" width="12" height="6" rx="1" fill="#3f8fe0"/><rect x="0.500" y="10" width="12" height="16" rx="1" fill="#fbfcfe" stroke="#c8d0dc"/><rect x="14.500" y="1" width="12" height="16" rx="1" fill="#fbfcfe" stroke="#c8d0dc"/><rect x="14.500" y="19.500" width="12" height="7" rx="1" fill="#f08a1d"/></svg>
<div class="t " style="left:919px;top:292.12px;font-size:11.2px;line-height:14.56px;color:#28477f;">模板</div>
<svg style="left:927.5px;top:311.0px" width="5" height="3" viewBox="0 0 6 3"><path d="M0 0h6L3 3z" fill="#666"/></svg>
<svg style="left:956px;top:258px" width="32" height="30" viewBox="0 0 32 30"><rect x="6" y="2" width="17" height="16" fill="#fbf6ef" stroke="#d8cdbd"/><path d="M9 6h8M9 9h8" stroke="#d8d0c4"/><path d="M1.500 12l13 8 13-8v16h-26z" fill="#f6c48a" stroke="#e3a762"/><path d="M1.500 12l13 8 13-8" fill="none" stroke="#cf9550" stroke-width="1.200"/><rect x="12.500" y="0.500" width="19" height="8.500" rx="1.500" fill="#ee1c24"/><text x="22" y="7.300" font-size="6.500" font-weight="bold" fill="#fff" text-anchor="middle" font-family="Liberation Sans, sans-serif">NEW</text></svg>
<div class="t " style="left:950px;top:292.12px;font-size:11.2px;line-height:14.56px;color:#28477f;">总结汇报</div>
<svg style="left:1000px;top:259px" width="29" height="29" viewBox="0 0 29 29"><rect x="1" y="1" width="27" height="27" rx="2.500" fill="#f5f9ff" stroke="#4a8fe0" stroke-width="1.500"/><circle cx="14.500" cy="9" r="4" fill="#3f86dc"/><circle cx="8" cy="19.500" r="4" fill="#3f86dc"/><circle cx="21" cy="19.500" r="4" fill="#3f86dc"/><path d="M14.500 9L8 19.500h13z" fill="none" stroke="#8ab6ea" stroke-width="1.200"/></svg>
<div class="t " style="left:998px;top:292.12px;font-size:11.2px;line-height:14.56px;color:#28477f;">关系图</div>
<svg style="left:1046px;top:260px" width="30" height="28" viewBox="0 0 30 28"><rect x="1" y="1" width="28" height="22" rx="1.500" fill="#eaf3ff" stroke="#4a8fe0" stroke-width="1.600"/><path d="M4 19l7-10 5 6 3-3 6 7z" fill="#3f8fe0"/><rect x="21" y="5" width="3.500" height="3.500" fill="#3f8fe0"/><path d="M10 26.500h10" stroke="#c8d6ea" stroke-width="1.500"/></svg>
<div class="t " style="left:1049px;top:292.12px;font-size:11.2px;line-height:14.56px;color:#28477f;">修图</div>
<svg style="left:1057.5px;top:311.0px" width="5" height="3" viewBox="0 0 6 3"><path d="M0 0h6L3 3z" fill="#666"/></svg>
<svg style="left:1092px;top:258px" width="31" height="31" viewBox="0 0 31 31"><defs><linearGradient id="fl" x1="0" y1="0" x2="1" y2="1"><stop offset="0" stop-color="#7b3cf0"/><stop offset="0.450" stop-color="#f0407a"/><stop offset="0.750" stop-color="#f7a82a"/><stop offset="1" stop-color="#5ad05a"/></linearGradient></defs><rect x="0.500" y="0.500" width="30" height="30" rx="3.500" fill="url(#fl)"/><path d="M22 2.500l4.500 4.500-4.500 4.500-4.500-4.500z" fill="#fde4ec"/><rect x="5" y="18" width="13" height="9.500" rx="1" fill="#fbeaf2"/><path d="M22 11.500v3.500h-10.500v3" fill="none" stroke="#fbd6e4" stroke-width="1.400"/></svg>
<div class="t " style="left:1091px;top:292.12px;font-size:11.2px;line-height:14.56px;color:#28477f;">流程图</div>
<div class="abs " style="left:1px;top:342px;width:1192px;height:3px;background:linear-gradient(#cde6fa 0,#cde6fa 30%,#97b2ce 45%,#97b2ce 66%,#a9c3e8 80%)"></div>
<div class="abs " style="left:1px;top:344px;width:183px;height:480px;background:linear-gradient(#aec6ec 0,#9cb8e3 10%,#8aa8d8 25%,#7d9dcf 42%,#6d8ec3 62%,#6285bd 80%,#6489c4 100%)"></div>
<div class="abs " style="left:1px;top:344px;width:179px;height:21px;background:linear-gradient(#c4d7f3,#a9c2ea 55%,#9ab7e4);border-bottom:1px solid #8fb0e0"></div>
<svg style="left:1px;top:344px" width="92" height="21" viewBox="0 0 92 21"><path d="M44 0.500h34c4 0 5 3 7 8l6 12H50z" fill="#b4cbee" stroke="#8fabd8" stroke-width="0.800"/><path d="M0 0.500h33c4 0 5 3 7 8l7 12H0z" fill="#c9dbf5" stroke="#8fabd8" stroke-width="0.800"/></svg>
<div class="t " style="left:6px;top:348.62px;font-size:11.2px;line-height:14.56px;color:#1a276b;font-weight:bold">幻灯片</div>
<div class="t " style="left:50px;top:348.62px;font-size:11.2px;line-height:14.56px;color:#2a3f7f;">大纲</div>
<svg style="left:164px;top:351px" width="9" height="8" viewBox="0 0 9 8"><path d="M1 0.500l7 7M8 0.500l-7 7" stroke="#5577b0" stroke-width="1.800"/></svg>
<div class="abs " style="left:165px;top:366px;width:13.5px;height:458px;background:linear-gradient(90deg,#7d99c8,#87a3d2 40%,#7a97c7);border-left:1px solid #93afdb"></div>
<svg style="left:167.5px;top:371px" width="8" height="5" viewBox="0 0 8 5"><path d="M0 5L4 0.500 8 5z" fill="#49639a"/></svg>
<div class="abs " style="left:165.5px;top:731.5px;width:12.5px;height:56.5px;background:linear-gradient(90deg,#dfe6f3,#c9d3e8);border:1px solid #aebbd6;border-radius:2px"></div>
<div class="abs " style="left:169.5px;top:758px;width:4.5px;height:1px;background:#8f9bb5"></div>
<div class="abs " style="left:169.5px;top:760.5px;width:4.5px;height:1.0px;background:#8f9bb5"></div>
<svg style="left:167.5px;top:814px" width="8" height="5" viewBox="0 0 8 5"><path d="M0 0L4 4.500 8 0z" fill="#49639a"/></svg>
<div class="abs " style="left:178.5px;top:344px;width:5.5px;height:480px;background:linear-gradient(90deg,#8fb0e6,#b9d2f6 40%,#a6c3f0)"></div>
<div class="thumb" style="top:371px;height:75px;overflow:hidden"><div class="abs" style="left:7px;top:5px;width:7px;height:5px;background:#111"></div><div class="abs" style="left:11px;top:5px;width:0;height:0;border-top:2.5px solid transparent;border-bottom:2.5px solid transparent;border-right:3px solid #999"></div><div class="abs" style="left:14px;top:10px;width:54px;height:1px;background:rgba(90,90,90,.7)"></div><div class="abs" style="left:24px;top:6.5px;width:52px;height:2.2px;background:rgba(80,80,80,.45)"></div><svg style="left:0;top:0" width="132" height="75" viewBox="0 0 132 75" fill="none"><path d="M15 18.2H121" stroke="#111" stroke-opacity="0.85" stroke-width="2.4" stroke-dasharray="2.6 .7 3.1 .6 2.2 .8 3.4 .7" stroke-dashoffset="0.0"/><path d="M15 22.2H119.9" stroke="#111" stroke-opacity="0.85" stroke-width="2.4" stroke-dasharray="3.2 .7 2.4 .6 3.6 .8 2.1 .6" stroke-dashoffset="1.7"/><path d="M15 26.2H89.2" stroke="#4a4a4a" stroke-opacity="0.62" stroke-width="2.4" stroke-dasharray="2.2 .6 3.5 .8 2.8 .7 3 .6" stroke-dashoffset="3.4"/><path d="M15 30.2H121" stroke="#4a4a4a" stroke-opacity="0.62" stroke-width="2.4" stroke-dasharray="2.6 .7 3.1 .6 2.2 .8 3.4 .7" stroke-dashoffset="0.09999999999999964"/><path d="M15 34.2H121" stroke="#4a4a4a" stroke-opacity="0.62" stroke-width="2.4" stroke-dasharray="3.2 .7 2.4 .6 3.6 .8 2.1 .6" stroke-dashoffset="1.7999999999999998"/><path d="M15 38.2H121" stroke="#4a4a4a" stroke-opacity="0.62" stroke-width="2.4" stroke-dasharray="2.2 .6 3.5 .8 2.8 .7 3 .6" stroke-dashoffset="3.5"/><path d="M15 42.2H121" stroke="#4a4a4a" stroke-opacity="0.62" stroke-width="2.4" stroke-dasharray="2.6 .7 3.1 .6 2.2 .8 3.4 .7" stroke-dashoffset="0.1999999999999993"/><path d="M15 46.2H121" stroke="#4a4a4a" stroke-opacity="0.62" stroke-width="2.4" stroke-dasharray="3.2 .7 2.4 .6 3.6 .8 2.1 .6" stroke-dashoffset="1.9000000000000004"/><path d="M15 50.2H121" stroke="#4a4a4a" stroke-opacity="0.62" stroke-width="2.4" stroke-dasharray="2.2 .6 3.5 .8 2.8 .7 3 .6" stroke-dashoffset="3.5999999999999996"/><path d="M15 54.2H121" stroke="#4a4a4a" stroke-opacity="0.62" stroke-width="2.4" stroke-dasharray="2.6 .7 3.1 .6 2.2 .8 3.4 .7" stroke-dashoffset="0.29999999999999893"/><path d="M15 58.2H121" stroke="#4a4a4a" stroke-opacity="0.62" stroke-width="2.4" stroke-dasharray="3.2 .7 2.4 .6 3.6 .8 2.1 .6" stroke-dashoffset="2.0"/><path d="M15 62.2H55.3" stroke="#4a4a4a" stroke-opacity="0.62" stroke-width="2.4" stroke-dasharray="2.2 .6 3.5 .8 2.8 .7 3 .6" stroke-dashoffset="3.6999999999999993"/></svg></div><div class="tn" style="top:372.5px">19</div>
<div class="thumb" style="top:455px;height:75px;overflow:hidden"><div class="abs" style="left:7px;top:5px;width:7px;height:5px;background:#111"></div><div class="abs" style="left:11px;top:5px;width:0;height:0;border-top:2.5px solid transparent;border-bottom:2.5px solid transparent;border-right:3px solid #999"></div><div class="abs" style="left:14px;top:10px;width:54px;height:1px;background:rgba(90,90,90,.7)"></div><div class="abs" style="left:24px;top:6.5px;width:52px;height:2.2px;background:rgba(80,80,80,.45)"></div><svg style="left:0;top:0" width="132" height="75" viewBox="0 0 132 75" fill="none"><path d="M15 18.2H121" stroke="#111" stroke-opacity="0.85" stroke-width="2.4" stroke-dasharray="2.6 .7 3.1 .6 2.2 .8 3.4 .7" stroke-dashoffset="0.0"/><path d="M15 22.1H115.7" stroke="#111" stroke-opacity="0.85" stroke-width="2.4" stroke-dasharray="3.2 .7 2.4 .6 3.6 .8 2.1 .6" stroke-dashoffset="1.7"/><path d="M15 26.0H118.9" stroke="#4a4a4a" stroke-opacity="0.62" stroke-width="2.4" stroke-dasharray="2.2 .6 3.5 .8 2.8 .7 3 .6" stroke-dashoffset="3.4"/><path d="M15 29.9H78.6" stroke="#4a4a4a" stroke-opacity="0.62" stroke-width="2.4" stroke-dasharray="2.6 .7 3.1 .6 2.2 .8 3.4 .7" stroke-dashoffset="0.09999999999999964"/><path d="M15 33.8H117.8" stroke="#4a4a4a" stroke-opacity="0.62" stroke-width="2.4" stroke-dasharray="3.2 .7 2.4 .6 3.6 .8 2.1 .6" stroke-dashoffset="1.7999999999999998"/><path d="M15 37.7H94.5" stroke="#4a4a4a" stroke-opacity="0.62" stroke-width="2.4" stroke-dasharray="2.2 .6 3.5 .8 2.8 .7 3 .6" stroke-dashoffset="3.5"/><path d="M15 41.6H117.8" stroke="#4a4a4a" stroke-opacity="0.62" stroke-width="2.4" stroke-dasharray="2.6 .7 3.1 .6 2.2 .8 3.4 .7" stroke-dashoffset="0.1999999999999993"/><path d="M15 45.5H99.8" stroke="#4a4a4a" stroke-opacity="0.62" stroke-width="2.4" stroke-dasharray="3.2 .7 2.4 .6 3.6 .8 2.1 .6" stroke-dashoffset="1.9000000000000004"/><path d="M15 49.4H118.9" stroke="#4a4a4a" stroke-opacity="0.62" stroke-width="2.4" stroke-dasharray="2.2 .6 3.5 .8 2.8 .7 3 .6" stroke-dashoffset="3.5999999999999996"/><path d="M15 53.3H110.4" stroke="#4a4a4a" stroke-opacity="0.62" stroke-width="2.4" stroke-dasharray="2.6 .7 3.1 .6 2.2 .8 3.4 .7" stroke-dashoffset="0.29999999999999893"/></svg></div><div class="tn" style="top:456.5px">20</div>
<div class="thumb" style="top:539px;height:75px;overflow:hidden"><div class="abs" style="left:7px;top:5px;width:7px;height:5px;background:#111"></div><div class="abs" style="left:11px;top:5px;width:0;height:0;border-top:2.5px solid transparent;border-bottom:2.5px solid transparent;border-right:3px solid #999"></div><div class="abs" style="left:14px;top:10px;width:54px;height:1px;background:rgba(90,90,90,.7)"></div><div class="abs" style="left:24px;top:6.5px;width:52px;height:2.2px;background:rgba(80,80,80,.45)"></div><svg style="left:0;top:0" width="132" height="75" viewBox="0 0 132 75" fill="none"><path d="M15 17.65H121" stroke="#111" stroke-opacity="0.85" stroke-width="2.3" stroke-dasharray="2.6 .7 3.1 .6 2.2 .8 3.4 .7" stroke-dashoffset="0.0"/><path d="M15 21.05H115.7" stroke="#111" stroke-opacity="0.85" stroke-width="2.3" stroke-dasharray="3.2 .7 2.4 .6 3.6 .8 2.1 .6" stroke-dashoffset="1.7"/><path d="M15 24.45H118.9" stroke="#4a4a4a" stroke-opacity="0.62" stroke-width="2.3" stroke-dasharray="2.2 .6 3.5 .8 2.8 .7 3 .6" stroke-dashoffset="3.4"/><path d="M15 27.85H115.7" stroke="#4a4a4a" stroke-opacity="0.62" stroke-width="2.3" stroke-dasharray="2.6 .7 3.1 .6 2.2 .8 3.4 .7" stroke-dashoffset="0.09999999999999964"/><path d="M15 31.25H46.8" stroke="#4a4a4a" stroke-opacity="0.62" stroke-width="2.3" stroke-dasharray="3.2 .7 2.4 .6 3.6 .8 2.1 .6" stroke-dashoffset="1.7999999999999998"/><path d="M15 34.65H121" stroke="#4a4a4a" stroke-opacity="0.62" stroke-width="2.3" stroke-dasharray="2.2 .6 3.5 .8 2.8 .7 3 .6" stroke-dashoffset="3.5"/><path d="M15 38.05H121" stroke="#4a4a4a" stroke-opacity="0.62" stroke-width="2.3" stroke-dasharray="2.6 .7 3.1 .6 2.2 .8 3.4 .7" stroke-dashoffset="0.1999999999999993"/><path d="M15 41.45H121" stroke="#4a4a4a" stroke-opacity="0.62" stroke-width="2.3" stroke-dasharray="3.2 .7 2.4 .6 3.6 .8 2.1 .6" stroke-dashoffset="1.9000000000000004"/><path d="M15 44.85H121" stroke="#4a4a4a" stroke-opacity="0.62" stroke-width="2.3" stroke-dasharray="2.2 .6 3.5 .8 2.8 .7 3 .6" stroke-dashoffset="3.5999999999999996"/><path d="M15 48.25H121" stroke="#4a4a4a" stroke-opacity="0.62" stroke-width="2.3" stroke-dasharray="2.6 .7 3.1 .6 2.2 .8 3.4 .7" stroke-dashoffset="0.29999999999999893"/><path d="M15 51.65H121" stroke="#4a4a4a" stroke-opacity="0.62" stroke-width="2.3" stroke-dasharray="3.2 .7 2.4 .6 3.6 .8 2.1 .6" stroke-dashoffset="2.0"/><path d="M15 55.05H121" stroke="#4a4a4a" stroke-opacity="0.62" stroke-width="2.3" stroke-dasharray="2.2 .6 3.5 .8 2.8 .7 3 .6" stroke-dashoffset="3.6999999999999993"/><path d="M15 58.45H121" stroke="#4a4a4a" stroke-opacity="0.62" stroke-width="2.3" stroke-dasharray="2.6 .7 3.1 .6 2.2 .8 3.4 .7" stroke-dashoffset="0.3999999999999986"/><path d="M15 61.85H121" stroke="#4a4a4a" stroke-opacity="0.62" stroke-width="2.3" stroke-dasharray="3.2 .7 2.4 .6 3.6 .8 2.1 .6" stroke-dashoffset="2.099999999999998"/><path d="M15 65.25H121" stroke="#4a4a4a" stroke-opacity="0.62" stroke-width="2.3" stroke-dasharray="2.2 .6 3.5 .8 2.8 .7 3 .6" stroke-dashoffset="3.8000000000000007"/><path d="M15 68.65H115.7" stroke="#4a4a4a" stroke-opacity="0.62" stroke-width="2.3" stroke-dasharray="2.6 .7 3.1 .6 2.2 .8 3.4 .7" stroke-dashoffset="0.5"/></svg></div><div class="tn" style="top:540.5px">21</div>
<div class="abs " style="left:3px;top:620.5px;width:154.5px;height:80.0px;background:linear-gradient(#f6b979 0,#e68a2e 30%,#e07b20 55%,#f4b16c 100%);border:1px solid #c9802f;border-radius:2px"></div><div class="thumb" style="top:623px;height:75px;overflow:hidden"><div class="abs" style="left:7px;top:5px;width:7px;height:5px;background:#111"></div><div class="abs" style="left:11px;top:5px;width:0;height:0;border-top:2.5px solid transparent;border-bottom:2.5px solid transparent;border-right:3px solid #999"></div><div class="abs" style="left:14px;top:10px;width:54px;height:1px;background:rgba(90,90,90,.7)"></div><div class="abs" style="left:24px;top:6.5px;width:52px;height:2.2px;background:rgba(80,80,80,.45)"></div><div class="abs slide-t" style="left:0;top:0;width:811px;height:456px;transform:scale(.1628);transform-origin:0 0;opacity:.75"><div class="t" style="left:98px;top:26px;font-size:23.3px;line-height:30px;letter-spacing:.3px;color:#777">三、涉网络知识产权案件的管辖问题</div><div class="t" style="left:85px;top:97px;font-size:20px;line-height:26px;color:#555">1.二十五条信息网络侵权行为包括所有侵权行为。浙江、江苏、上海等</div><div class="t" style="left:85px;top:146px;font-size:20px;line-height:24px;color:#555">2.二十五条信息网络侵权行为不包括知识产权侵权行为。最高院（没有明确，<br>只排除了网购收货地）</div><div class="t" style="left:85px;top:219px;font-size:20px;line-height:24px;color:#555">3.二十五条信息网络侵权行为只包括利用网络直接侵害知识产权的行为。福建、<br>深圳等</div></div></div><div class="tn" style="top:624.5px">22</div>
<div class="thumb" style="top:707px;height:75px;overflow:hidden"><div class="abs" style="left:7px;top:5px;width:7px;height:5px;background:#111"></div><div class="abs" style="left:11px;top:5px;width:0;height:0;border-top:2.5px solid transparent;border-bottom:2.5px solid transparent;border-right:3px solid #999"></div><div class="abs" style="left:14px;top:10px;width:54px;height:1px;background:rgba(90,90,90,.7)"></div><div class="abs" style="left:24px;top:6.5px;width:52px;height:2.2px;background:rgba(80,80,80,.45)"></div><svg style="left:0;top:0" width="132" height="75" viewBox="0 0 132 75" fill="none"><path d="M15 17.7H118.8" stroke="#4a4a4a" stroke-opacity="0.45" stroke-width="2.4" stroke-dasharray="2.6 .7 3.1 .6 2.2 .8 3.4 .7" stroke-dashoffset="0.0"/><path d="M15 21.7H122" stroke="#4a4a4a" stroke-opacity="0.45" stroke-width="2.4" stroke-dasharray="3.2 .7 2.4 .6 3.6 .8 2.1 .6" stroke-dashoffset="1.7"/><path d="M15 25.7H122" stroke="#4a4a4a" stroke-opacity="0.45" stroke-width="2.4" stroke-dasharray="2.2 .6 3.5 .8 2.8 .7 3 .6" stroke-dashoffset="3.4"/><path d="M15 29.7H122" stroke="#4a4a4a" stroke-opacity="0.45" stroke-width="2.4" stroke-dasharray="2.6 .7 3.1 .6 2.2 .8 3.4 .7" stroke-dashoffset="0.09999999999999964"/><path d="M15 33.7H122" stroke="#4a4a4a" stroke-opacity="0.45" stroke-width="2.4" stroke-dasharray="3.2 .7 2.4 .6 3.6 .8 2.1 .6" stroke-dashoffset="1.7999999999999998"/><path d="M15 37.7H68.5" stroke="#4a4a4a" stroke-opacity="0.45" stroke-width="2.4" stroke-dasharray="2.2 .6 3.5 .8 2.8 .7 3 .6" stroke-dashoffset="3.5"/><path d="M15 45.7H122" stroke="#4a4a4a" stroke-opacity="0.45" stroke-width="2.4" stroke-dasharray="3.2 .7 2.4 .6 3.6 .8 2.1 .6" stroke-dashoffset="1.9000000000000004"/><path d="M15 49.7H122" stroke="#4a4a4a" stroke-opacity="0.45" stroke-width="2.4" stroke-dasharray="2.2 .6 3.5 .8 2.8 .7 3 .6" stroke-dashoffset="3.5999999999999996"/><path d="M15 53.7H100.6" stroke="#4a4a4a" stroke-opacity="0.45" stroke-width="2.4" stroke-dasharray="2.6 .7 3.1 .6 2.2 .8 3.4 .7" stroke-dashoffset="0.29999999999999893"/><path d="M15 61.7H122" stroke="#4a4a4a" stroke-opacity="0.45" stroke-width="2.4" stroke-dasharray="2.2 .6 3.5 .8 2.8 .7 3 .6" stroke-dashoffset="3.6999999999999993"/><path d="M15 65.7H122" stroke="#4a4a4a" stroke-opacity="0.45" stroke-width="2.4" stroke-dasharray="2.6 .7 3.1 .6 2.2 .8 3.4 .7" stroke-dashoffset="0.3999999999999986"/><path d="M15 69.7H63.1" stroke="#4a4a4a" stroke-opacity="0.45" stroke-width="2.4" stroke-dasharray="3.2 .7 2.4 .6 3.6 .8 2.1 .6" stroke-dashoffset="2.099999999999998"/></svg></div><div class="tn" style="top:708.5px">23</div>
<div class="thumb" style="top:790.5px;height:33.5px;overflow:hidden"><div class="abs" style="left:60px;top:30.5px;width:11px;height:2px;background:#555"></div></div><div class="tn" style="top:792.0px">24</div>
<div class="abs " style="left:184px;top:344px;width:996px;height:476px;background:linear-gradient(#a3beea 0,#94b0de 6%,#87a5d5 12%,#7d9dcf 32%,#6d8ec3 55%,#5e80b8 75%,#5a7db5 88%,#6189c5 100%)"></div>
<svg style="left:184px;top:344px" width="996" height="60" viewBox="0 0 996 60"><defs><linearGradient id="hl" x1="0" y1="0" x2="0" y2="1"><stop offset="0" stop-color="#c2d6f6" stop-opacity=".9"/><stop offset="1" stop-color="#b2caf0" stop-opacity=".15"/></linearGradient></defs><path d="M0 0H996V3H120C80 8 30 18 0 32z" fill="url(#hl)"/></svg>
<div class="abs " style="left:184px;top:820px;width:1009px;height:4.5px;background:#a7c5f1"></div>
<div class="abs " style="left:1177px;top:344px;width:3.5px;height:476px;background:linear-gradient(90deg,#9dbbec,#afcaf5)"></div>
<div class="abs " style="left:1180.5px;top:344px;width:12.5px;height:429px;background:linear-gradient(90deg,#7897c8,#7f9dcd 50%,#7795c6)"></div>
<div class="abs " style="left:1180.5px;top:773px;width:12.5px;height:47px;background:#9dbbe9"></div>
<svg style="left:1182px;top:349px" width="9" height="5" viewBox="0 0 9 5"><path d="M0 5L4.500 0.500 9 5z" fill="#4a6399"/></svg>
<div class="abs " style="left:1178.5px;top:702px;width:14.0px;height:14.5px;background:linear-gradient(#eef1f6,#d5dbe6);border:1px solid #b8c2d6;border-radius:2px"></div>
<div class="abs " style="left:1183px;top:707.5px;width:5px;height:1.0px;background:#8a93a8"></div>
<div class="abs " style="left:1183px;top:710px;width:5px;height:1px;background:#8a93a8"></div>
<svg style="left:1181.500px;top:763px" width="8" height="5" viewBox="0 0 8 5"><path d="M0 0L4 4.500 8 0z" fill="#4a6399"/></svg>
<svg style="left:1182px;top:777px" width="8" height="9" viewBox="0 0 8 9"><path d="M0.500 4L4 0.500 7.500 4zM0.500 8.500L4 5 7.500 8.500z" fill="#111"/></svg>
<svg style="left:1182px;top:792px" width="8" height="9" viewBox="0 0 8 9"><path d="M0.500 0.500L4 4 7.500 0.500zM0.500 5L4 8.500 7.500 5z" fill="#111"/></svg>
<div class="abs slide" style="left:275px;top:354px;width:811px;height:456px;background:#f5f5f7;box-shadow:2px 2px 3px rgba(40,60,110,.55)"></div>
<svg style="left:311px;top:375px" width="372" height="40" viewBox="0 0 372 40"><defs><linearGradient id="ul" x1="0" y1="0" x2="1" y2="0"><stop offset="0" stop-color="#777"/><stop offset="0.850" stop-color="#8a8a8a"/><stop offset="1" stop-color="#999" stop-opacity=".5"/></linearGradient></defs><path d="M0 0H36.500L18 18.500 36 37H0z" fill="#000"/><path d="M36.500 0H48.500L30 18.500 47 36.500H36L18 18.500z" fill="#8a8a8a"/><path d="M36 36H369V38H38z" fill="url(#ul)"/></svg>
<div class="t slide-t" id="stitle" style="left:372.3px;top:380.3px;font-size:23.3px;line-height:30px;letter-spacing:.3px">三、涉网络知识产权案件的管辖问题</div>
<div class="t slide-t" id="sl1" style="left:360px;top:452.2px;font-size:20px;line-height:26px;letter-spacing:.29px"><span class="dg">1.</span>二十五条信息网络侵权行为包括所有侵权行为。浙江、江苏、上海等</div>
<div class="t slide-t" id="sl2" style="left:360px;top:502.2px;font-size:20px;line-height:24.4px;letter-spacing:.29px"><span class="dg">2.</span>二十五条信息网络侵权行为不包括知识产权侵权行为。最高院（没有明确，<br>只排除了网购收货地）</div>
<div class="t slide-t" id="sl3" style="left:360px;top:575.2px;font-size:20px;line-height:24.2px;letter-spacing:.29px"><span class="dg">3.</span>二十五条信息网络侵权行为只包括利用网络直接侵害知识产权的行为。福建、<br>深圳等</div>
<svg style="left:559px;top:615px" width="22" height="30" viewBox="0 0 22 30"><path d="M9 1v10M4 6h10" stroke="#000" stroke-width="1.300"/><path d="M9 1v2M9 9v2M4 6h2M12 6h2" stroke="#000" stroke-width="2.200"/><path d="M9.500 9.500v15l3.500-3.200 2.600 5.700 2.400-1.100-2.600-5.500h4.600z" fill="#fff" stroke="#000" stroke-width="1.100"/></svg>
<div class="abs " style="left:1px;top:824.5px;width:1192px;height:20.0px;background:linear-gradient(#d6e5f9 0,#c3d8f4 45%,#b3cdf0 55%,#c2d8f5 100%)"></div>
<div class="abs " style="left:952px;top:824.5px;width:241px;height:20.0px;background:linear-gradient(#a9c4ee 0,#8fadde 50%,#84a4d8 55%,#9dbbe9 100%)"></div>
<div class="abs " style="left:1px;top:844.5px;width:1192px;height:2.5px;background:linear-gradient(90deg,#3a6a86,#1d5f7a 30%,#1d5f7a)"></div>
<div class="t " style="left:6.2px;top:827.92px;font-size:11.2px;line-height:14.56px;color:#222b3a;letter-spacing:.4px">幻灯片 22/24</div>
<div class="t " style="left:93.7px;top:827.92px;font-size:11.2px;line-height:14.56px;color:#222b3a;letter-spacing:.4px">"Office 主题"</div>
<div class="t " style="left:203px;top:827.92px;font-size:11.2px;line-height:14.56px;color:#222b3a;letter-spacing:-.6px">中文(简体，中国)</div>
<div class="abs " style="left:80.5px;top:826px;width:1.0px;height:17px;background:#a9c0e4;box-shadow:1px 0 0 #e6effc"></div>
<div class="abs " style="left:171.5px;top:826px;width:1.0px;height:17px;background:#a9c0e4;box-shadow:1px 0 0 #e6effc"></div>
<div class="abs " style="left:293.5px;top:826px;width:1.0px;height:17px;background:#a9c0e4;box-shadow:1px 0 0 #e6effc"></div>
<svg style="left:177px;top:826px" width="16" height="14" viewBox="0 0 16 14"><ellipse cx="6" cy="10" rx="5.500" ry="3.500" fill="#eef2f8" stroke="#8a95ab"/><path d="M5 7l3 3 6-9" fill="none" stroke="#3a4ea8" stroke-width="1.700"/></svg>
<div class="abs " style="left:957px;top:825.5px;width:51.5px;height:18.0px;background:linear-gradient(#e6effb,#cfdff5);border:1px solid #9db7e0"></div>
<svg style="left:961px;top:829px" width="10" height="10" viewBox="0 0 10 10"><rect x="0.500" y="0.500" width="9" height="8" fill="#f4f6fa" stroke="#444"/><path d="M3.500 0.500v8M3.500 5h6" stroke="#444"/></svg>
<svg style="left:977.500px;top:829px" width="10" height="10" viewBox="0 0 10 10"><path d="M0.500 1h3.500v3H0.500zM6 1h3.500v3H6zM0.500 6h3.500v3H0.500zM6 6h3.500v3H6z" fill="#f4f6fa" stroke="#444" stroke-width="0.900"/></svg>
<svg style="left:995px;top:829px" width="10" height="10" viewBox="0 0 10 10"><path d="M0.500 0.500h9M1.500 1v4h7V1M3 9.500h4M5 5v4" fill="none" stroke="#333" stroke-width="1.100"/></svg>
<div class="t " style="left:1014px;top:827.74px;font-size:11.5px;line-height:14.95px;color:#1e3f8f;letter-spacing:.2px">68%</div>
<svg style="left:1043px;top:826px" width="17" height="17" viewBox="0 0 17 17"><circle cx="8.500" cy="8.500" r="7.500" fill="#e9eef7" stroke="#8fa3c8"/><path d="M5 8.500h7" stroke="#555" stroke-width="1.600"/></svg>
<div class="abs " style="left:1062px;top:834px;width:90px;height:1px;background:#7f9bcd;box-shadow:0 1px 0 #b9d0f3"></div>
<div class="abs " style="left:1106.5px;top:831px;width:1.0px;height:7px;background:#8aa5d5"></div>
<svg style="left:1087px;top:827px" width="9" height="15" viewBox="0 0 9 15"><path d="M0.500 0.500h8v9.500l-4 4.500-4-4.500z" fill="#e4ebf7" stroke="#8fa3c8"/></svg>
<svg style="left:1152.500px;top:826px" width="17" height="17" viewBox="0 0 17 17"><circle cx="8.500" cy="8.500" r="7.500" fill="#e9eef7" stroke="#8fa3c8"/><path d="M4.500 8.500h8M8.500 4.500v8" stroke="#444" stroke-width="1.600"/></svg>
<svg style="left:1175px;top:827px" width="14" height="14" viewBox="0 0 14 14"><rect x="0.500" y="0.500" width="13" height="13" fill="#f1f4f9" stroke="#c6d2e6"/><path d="M4.500 1v3M3 2.500h3M9.500 1v3M7 7h0.100M1 4.500h3M10 4.500h3M4.500 10v3M9.500 10v3M1 9.500h3M10 9.500h3" stroke="#555" stroke-width="1"/></svg>
</div>
<div id="vstrip"></div>
<div class="tile" style="top:96px;border-color:#06c864"><div class="in" style="background:#333"><svg style="left:0;top:0" width="237" height="130" viewBox="0 0 237 130"><defs><filter id="bl" x="-10%" y="-10%" width="120%" height="120%"><feGaussianBlur stdDeviation="4"/></filter><filter id="bl2" x="-10%" y="-10%" width="120%" height="120%"><feGaussianBlur stdDeviation="1.1"/></filter><filter id="bl3" x="-20%" y="-20%" width="140%" height="140%"><feGaussianBlur stdDeviation="0.6"/></filter><linearGradient id="skin" x1="0" y1="0" x2="1" y2="0"><stop offset="0" stop-color="#b4948c"/><stop offset="0.35" stop-color="#d2b4ac"/><stop offset="0.7" stop-color="#caa9a2"/><stop offset="1" stop-color="#a98a86"/></linearGradient><linearGradient id="wall" x1="0" y1="0" x2="0" y2="1"><stop offset="0" stop-color="#93656a"/><stop offset="0.4" stop-color="#7f5250"/><stop offset="1" stop-color="#6e4440"/></linearGradient></defs><rect width="237" height="130" fill="#8c8a98"/><g filter="url(#bl)"><rect x="-12" y="-12" width="84" height="160" fill="url(#wall)"/><rect x="30" y="-5" width="28" height="60" fill="#9a6c6c" opacity=".7"/><rect x="70" y="18" width="95" height="125" fill="#5b4347"/><rect x="68" y="-12" width="100" height="32" fill="#9b99a8"/><rect x="160" y="-12" width="90" height="60" fill="#918f9e"/><rect x="130" y="6" width="70" height="12" fill="#74717d"/><rect x="158" y="40" width="22" height="100" fill="#8a8795"/><rect x="178" y="46" width="56" height="90" fill="#3b2f32"/><rect x="192" y="58" width="30" height="38" fill="#c4c8d0"/><rect x="196" y="96" width="26" height="22" fill="#6a6670"/><rect x="222" y="100" width="20" height="40" fill="#8a8a68"/></g><g filter="url(#bl2)"><path d="M76 130c1-10 6-19 16-24l12-7 8-6h34l10 6 14 5c14 5 28 13 36 26z" fill="#1b1b21"/><path d="M112 96l12 22 6 6 6-4 10-24z" fill="#c0a098"/><path d="M126 130l2-8 7 2 2 6z" fill="#dfe5f0"/><path d="M98 98l12-8 16 40H86zM154 94l-6-2-12 38h34z" fill="#1c1c23"/><path d="M104 96l18 30M150 96l-12 30" stroke="#2e2e38" stroke-width="1.500" fill="none"/><path d="M103 62c-1-14 6-21 24-21 16 0 23 8 22.500 23l-1 17c-1 11-5 21-13 27-4 3-12 3-16 0-8-6-13-15-15-27z" fill="url(#skin)"/><path d="M104 78c1 10 5 20 12 27M148 80c-1 9-4 17-10 24" stroke="#a98880" stroke-width="2.500" fill="none" opacity=".6"/><path d="M99.500 66c-4-26 6-39 28-39 20 0 28 12 25 38-1-9-3-16-6.500-21-9-4-25-5-35 1-5 4-9 12-11.500 21z" fill="#1e1e24"/><ellipse cx="151" cy="72" rx="2.500" ry="5" fill="#b8968e"/><ellipse cx="101.500" cy="74" rx="2" ry="4.500" fill="#a88880"/><path d="M117 89c5-3.500 14-3.500 19 0 1 6-3 10-9.500 10s-10.500-4-9.500-10z" fill="#9c5a5a"/><path d="M119 90.500c5-2 11-2 15.500 0l-1 3.500c-4 1-9.500 1-13.500 0z" fill="#f3e8e4"/><path d="M120 96.500c4 2 10 2 14 0" stroke="#c08a88" stroke-width="1.600" fill="none"/><path d="M126 68c-1 6-2 9-4.500 11.500 2.500 1.500 6.500 1.500 9 0" fill="none" stroke="#b08a84" stroke-width="1.400"/><ellipse cx="137.500" cy="66" rx="8.500" ry="6.500" fill="#8098ee" opacity=".5"/><path d="M131 62.500h12" stroke="#5f7ff0" stroke-width="3" opacity=".75"/><ellipse cx="112" cy="70" rx="9" ry="7.500" fill="none" stroke="#2a2d4c" stroke-width="1.700"/><ellipse cx="137.500" cy="66.500" rx="9.500" ry="7.800" fill="none" stroke="#2a2d4c" stroke-width="1.700"/><path d="M121 68.500c2-1.500 5-1.800 7-.8M103 68l-3-1.500M147 64l5-2" stroke="#2a2d4c" stroke-width="1.700" fill="none"/><path d="M105 60c4-2.500 10-3 14-1.500M130 57c4-2.500 10-2.500 14-.5" stroke="#3a2f30" stroke-width="2" fill="none"/><path d="M107 69.500c3 1 6 1 9 0M133 66.500c3 1 6 1 9 0" stroke="#4a3a3a" stroke-width="1.500" fill="none"/></g><rect x="0" y="0" width="3" height="130" fill="#2f2a28"/><rect x="234" y="0" width="3" height="130" fill="#33302c"/></svg></div><div class="lab" style="width:88px"><div class="ub" style="background:#0a6cff"><svg style="left:1.5px;top:1.5px" width="22" height="22" viewBox="0 0 24 24" ><circle cx="12" cy="7.6" r="3.7" fill="#fff"/><path d="M3.4 20.6c0-4.6 2.6-7.2 5.8-8.1l2.8 2.4 2.8-2.4c3.200 .9 5.800 3.500 5.800 8.100z" fill="#fff"/></svg></div><svg style="left:32.5px;top:3px" width="18" height="21" viewBox="0 0 18 21"><rect x="5.500" y="1.200" width="8" height="12" rx="4" fill="#f4f4f4"/><path d="M5.500 9.300h8a4 4 0 0 1-8 0z" fill="#6be25a"/><path d="M2.300 9.500a7.200 7.200 0 0 0 14.400 0" fill="none" stroke="#f4f4f4" stroke-width="1.500" stroke-linecap="round"/><path d="M9.500 17v2.500" stroke="#f4f4f4" stroke-width="1.700" stroke-linecap="round"/></svg><span style="position:absolute;left:57px;top:0.5px">陈为</span></div></div>
<div class="tile" style="top:242px"><div class="in" style="background:radial-gradient(ellipse at 45% 45%,#20211d 0,#1b1c19 50%,#161714 100%)"></div><div class="lab" style="width:99.5px"><svg style="left:5.5px;top:3px" width="18" height="21" viewBox="0 0 18 21"><rect x="5.500" y="1.200" width="8" height="12" rx="4" fill="#f4f4f4"/><path d="M2.300 9.500a7.200 7.200 0 0 0 14.400 0" fill="none" stroke="#f4f4f4" stroke-width="1.500" stroke-linecap="round"/><path d="M9.500 17v2.500" stroke="#f4f4f4" stroke-width="1.700" stroke-linecap="round"/><path d="M2 18.500L17 3.500" stroke="#0e0f10" stroke-width="3.400"/><path d="M2 18.300L17 3.300" stroke="#ee4a45" stroke-width="1.500" stroke-linecap="round"/></svg><span style="position:absolute;left:30px;top:0.5px">吴士虎律师</span></div></div>
<svg style="left:0;top:0" width="0" height="0"><defs><filter id="pb" x="-5%" y="-5%" width="110%" height="110%"><feGaussianBlur stdDeviation="0.7"/></filter><filter id="pb2" x="-5%" y="-5%" width="110%" height="110%"><feGaussianBlur stdDeviation="1.4"/></filter><linearGradient id="gcs" x1="0" y1="0" x2="0" y2="1"><stop offset="0" stop-color="#7ea3dc"/><stop offset="0.35" stop-color="#a9c2e6"/><stop offset="0.5" stop-color="#c7cfdf"/><stop offset="0.62" stop-color="#6f86a6"/><stop offset="0.72" stop-color="#8597b0"/><stop offset="1" stop-color="#3f587a"/></linearGradient><linearGradient id="gjy" x1="0" y1="0" x2="0" y2="1"><stop offset="0" stop-color="#0c1520"/><stop offset="0.4" stop-color="#14303c"/><stop offset="0.6" stop-color="#1f4a50"/><stop offset="0.66" stop-color="#2f8a68"/><stop offset="0.7" stop-color="#3a3a3a"/><stop offset="1" stop-color="#a0602c"/></linearGradient><radialGradient id="gwa" cx="50%" cy="40%" r="60%"><stop offset="0" stop-color="#6f7486"/><stop offset="1" stop-color="#585d6e"/></radialGradient></defs></svg>
<div class="tile" style="top:388px"><div class="in"></div><div class="av" style="left:88.2px;top:26px;width:65px;height:65px;background:#0a6cff;color:#fff;font-size:22px;line-height:64px;text-align:center">富明</div><div class="lab" style="width:176px"><div class="ub" style="background:#fa7d0f"><svg style="left:1.5px;top:1.5px" width="22" height="22" viewBox="0 0 24 24" ><circle cx="12" cy="7.6" r="3.7" fill="#fff"/><path d="M3.4 20.6c0-4.6 2.6-7.2 5.8-8.1l2.8 2.4 2.8-2.4c3.200 .9 5.800 3.500 5.800 8.100z" fill="#fff"/></svg></div><svg style="left:32.5px;top:3px" width="18" height="21" viewBox="0 0 18 21"><rect x="5.500" y="1.200" width="8" height="12" rx="4" fill="#f4f4f4"/><path d="M2.300 9.500a7.200 7.200 0 0 0 14.400 0" fill="none" stroke="#f4f4f4" stroke-width="1.500" stroke-linecap="round"/><path d="M9.500 17v2.500" stroke="#f4f4f4" stroke-width="1.700" stroke-linecap="round"/><path d="M2 18.500L17 3.500" stroke="#0e0f10" stroke-width="3.400"/><path d="M2 18.300L17 3.300" stroke="#ee4a45" stroke-width="1.500" stroke-linecap="round"/></svg><span style="position:absolute;left:57px;top:0.5px">温州知产委+徐富明</span></div></div>
<div class="tile" style="top:534px"><div class="in"></div><div class="av" style="left:88.2px;top:26px;width:65px;height:65px"><svg style="left:0;top:0" width="65" height="65" viewBox="0 0 65 65"><g filter="url(#pb)"><rect x="-3" y="-3" width="71" height="71" fill="#8c887c"/><rect x="-3" y="-3" width="40" height="24" fill="#aaa596"/><path d="M6 -3v22M12 -3v22M18 -3v22M24 -3v22M30 -3v22" stroke="#7d796d" stroke-width="1.6"/><rect x="-3" y="19" width="29" height="50" fill="#e9e9e7"/><path d="M2 25h12" stroke="#8a8a8a" stroke-width="1.5"/><path d="M-3 38h9l12 30H-3z" fill="#c24a3a"/><path d="M2 38h4l12 30h-5z" fill="#3a3a44"/><rect x="24" y="7" width="44" height="46" fill="#2f3a48"/><path d="M24 7h44M24.800 7v26" stroke="#171b22" stroke-width="2"/><path d="M42 30h20M44 36h18M46 42h16" stroke="#5a6878" stroke-width="1.2"/><path d="M19 68c-1-16 1-28 7-32l8-4h7l9 4c6 4 9 12 8 32z" fill="#7d8077"/><path d="M27 40c3 8 4 16 3 26M46 40c2 8 2 14 1 22" stroke="#5f6259" stroke-width="1.5" fill="none"/><ellipse cx="35.500" cy="19.500" rx="6.300" ry="8" fill="#c9a58f"/><path d="M29 17c-.5-6 2.500-9 6.500-9s7 3 6.500 8.500c-2-3-5-4-8-3.500-2 .3-4 1.800-5 4z" fill="#2a2623"/><rect x="32" y="26" width="2.500" height="16" rx="1" fill="#1c1c1e"/><ellipse cx="32" cy="36" rx="3.300" ry="4" fill="#c29a86"/><ellipse cx="45" cy="49" rx="3.500" ry="3" fill="#c9a08c"/><path d="M28 63h22" stroke="#2a2d3a" stroke-width="2"/></g></svg></div><div class="lab" style="width:100.5px"><div class="ub" style="background:#0a6cff"><svg style="left:1.5px;top:1.5px" width="22" height="22" viewBox="0 0 24 24" ><circle cx="12" cy="7.6" r="3.7" fill="#fff"/><path d="M3.4 20.6c0-4.6 2.6-7.2 5.8-8.1l2.8 2.4 2.8-2.4c3.200 .9 5.800 3.500 5.800 8.100z" fill="#fff"/></svg></div><svg style="left:32.5px;top:3px" width="18" height="21" viewBox="0 0 18 21"><rect x="5.500" y="1.200" width="8" height="12" rx="4" fill="#f4f4f4"/><path d="M2.300 9.500a7.200 7.200 0 0 0 14.400 0" fill="none" stroke="#f4f4f4" stroke-width="1.500" stroke-linecap="round"/><path d="M9.500 17v2.500" stroke="#f4f4f4" stroke-width="1.700" stroke-linecap="round"/><path d="M2 18.500L17 3.500" stroke="#0e0f10" stroke-width="3.400"/><path d="M2 18.300L17 3.300" stroke="#ee4a45" stroke-width="1.500" stroke-linecap="round"/></svg><span style="position:absolute;left:57px;top:0.5px">黄润生</span></div></div>
<div class="tile" style="top:681px"><div class="in"></div><div class="av" style="left:88.2px;top:26px;width:65px;height:65px"><svg style="left:0;top:0" width="65" height="65" viewBox="0 0 65 65"><g filter="url(#pb)"><rect x="-3" y="-3" width="71" height="71" fill="url(#gwa)"/><path d="M4 68c1-12 6-15 14-18l10-4h8l12 5c8 3 12 6 13 17z" fill="#1f2747"/><path d="M21 44l5 24h14l9-25-8-4-12 0z" fill="#cdd9ee"/><path d="M26 50l4-2 4 3-1 17h-7l-1-10z" fill="#232e5a"/><path d="M26.500 54l6 3M26 60l6.500 3" stroke="#c7d0e6" stroke-width="1.300"/><path d="M35 49l12-8 6 6-12 21h-8z" fill="#232b4e"/><ellipse cx="30.500" cy="27" rx="12.500" ry="16.500" fill="#e0b8a2"/><ellipse cx="43.500" cy="28" rx="2" ry="4" fill="#d4a890"/><path d="M18 25c-2-14 4-21 13-21s15 6 12.500 21c-1-6-3-10-6-12-5 1-11 1-15-.5-2.500 3-4 7-4.500 12.500z" fill="#1f1a19"/><path d="M19 23.500h9.500M32 23.500h10" stroke="#5c4a44" stroke-width="1.100"/><path d="M24 35.500c2 1 5 1 7 0" stroke="#b67a72" stroke-width="1.300" fill="none"/></g></svg></div><div class="lab" style="width:100.5px"><div class="ub" style="background:#0a6cff"><svg style="left:1.5px;top:1.5px" width="22" height="22" viewBox="0 0 24 24" ><circle cx="12" cy="7.6" r="3.7" fill="#fff"/><path d="M3.4 20.6c0-4.6 2.6-7.2 5.8-8.1l2.8 2.4 2.8-2.4c3.200 .9 5.800 3.500 5.800 8.100z" fill="#fff"/></svg></div><svg style="left:32.5px;top:3px" width="18" height="21" viewBox="0 0 18 21"><rect x="5.500" y="1.200" width="8" height="12" rx="4" fill="#f4f4f4"/><path d="M2.300 9.500a7.200 7.200 0 0 0 14.400 0" fill="none" stroke="#f4f4f4" stroke-width="1.500" stroke-linecap="round"/><path d="M9.500 17v2.500" stroke="#f4f4f4" stroke-width="1.700" stroke-linecap="round"/><path d="M2 18.500L17 3.500" stroke="#0e0f10" stroke-width="3.400"/><path d="M2 18.300L17 3.300" stroke="#ee4a45" stroke-width="1.500" stroke-linecap="round"/></svg><span style="position:absolute;left:57px;top:0.5px">王延军</span></div></div>
<div class="tile" style="top:827px"><div class="in"></div><div class="av" style="left:88.2px;top:26px;width:65px;height:65px"><svg style="left:0;top:0" width="65" height="65" viewBox="0 0 65 65"><g filter="url(#pb)"><rect x="-3" y="-3" width="71" height="71" fill="#3a2f2a"/><rect x="-3" y="-3" width="71" height="24" fill="#eef0ef"/><path d="M32 12h12" stroke="#aab" stroke-width="1.200"/><rect x="-3" y="20" width="71" height="9" fill="#cdc8ba"/><rect x="-3" y="28.500" width="71" height="2.200" fill="#3a352d"/><rect x="-3" y="31" width="30" height="36" fill="#b49a98"/><rect x="27" y="31" width="41" height="10" fill="#a2532c"/><rect x="-3" y="36" width="9" height="32" fill="#2a2220"/><rect x="6" y="36" width="3" height="32" fill="#d8b8b4"/><rect x="40" y="40" width="28" height="28" fill="#1f1a18"/><path d="M57 38l9 3-4 13-8-4z" fill="#e6e6ea"/><path d="M8 68c0-16 3-24 10-27l8-4h9l10 5c5 3 8 12 8 26z" fill="#3b3e39"/><path d="M26 36l5 12 4 20h6l-2-22-2-9z" fill="#e9e6e2"/><path d="M35.500 42l3 1 2 25h-4z" fill="#d9a0aa"/><ellipse cx="31" cy="26" rx="7.800" ry="10" fill="#d3a98f"/><path d="M23 24c-1-8 2.500-12 8-12 4 0 6 1.500 7 4-4-1-7 0-9 2-1.500 1.500-2 4-2.500 8z" fill="#1d1a18"/><rect x="34" y="43" width="3.500" height="9" rx="1.200" fill="#18181a"/><ellipse cx="35" cy="54" rx="4.500" ry="4" fill="#cfa58e"/></g></svg></div><div class="lab" style="width:74px"><svg style="left:5.5px;top:3px" width="18" height="21" viewBox="0 0 18 21"><rect x="5.500" y="1.200" width="8" height="12" rx="4" fill="#f4f4f4"/><path d="M2.300 9.500a7.200 7.200 0 0 0 14.400 0" fill="none" stroke="#f4f4f4" stroke-width="1.500" stroke-linecap="round"/><path d="M9.500 17v2.500" stroke="#f4f4f4" stroke-width="1.700" stroke-linecap="round"/><path d="M2 18.500L17 3.500" stroke="#0e0f10" stroke-width="3.400"/><path d="M2 18.300L17 3.300" stroke="#ee4a45" stroke-width="1.500" stroke-linecap="round"/></svg><span style="position:absolute;left:30px;top:0.5px">陶子男</span></div></div>
<div id="panel">
<div class="abs" style="left:0;top:0;width:464px;height:37px;background:#fff;border-top:1px solid #d9dbe0;border-bottom:1px solid #d0d3da"></div>
<div class="abs" style="left:1px;top:1px;width:213px;height:35px;background:#eeeff3;border-right:1px solid #d0d3da"></div>
<div class="abs" style="left:428px;top:1px;width:34px;height:35px;background:#eeeff3;border-left:1px solid #d0d3da"></div>
<svg style="left:7px;top:9px" width="20" height="20" viewBox="0 0 20 20"><path d="M1 5.500a2 2 0 0 1 2-2h11a2 2 0 0 1 2 2v7a2 2 0 0 1-2 2h-2v3l-4-3H3a2 2 0 0 1-2-2z" fill="#8e8e8e"/><circle cx="5" cy="9" r="1" fill="#fff"/><circle cx="8.500" cy="9" r="1" fill="#fff"/><circle cx="12" cy="9" r="1" fill="#fff"/><circle cx="14.500" cy="3.500" r="3.400" fill="#f5342f"/></svg>
<div class="t" style="left:30px;top:8.5px;font-size:15px;line-height:20px;color:#000">聊天</div>
<svg style="left:220px;top:9px" width="19" height="18" viewBox="0 0 19 18"><circle cx="8" cy="5.500" r="4" fill="#8e8e8e"/><path d="M0.500 17c0-5 3-7.500 7.500-7.500s7.500 2.500 7.500 7.500z" fill="#8e8e8e"/><path d="M13.500 4.500a3 3 0 0 1 0 5.500M16 17h2.500c0-3.500-1-5.500-3.500-6.500" fill="#b5b5b5"/></svg>
<div class="t" style="left:244px;top:8.5px;font-size:15px;line-height:20px;color:#000;letter-spacing:.1px">管理成员(279)</div>
<svg style="left:389px;top:17px" width="16" height="3" viewBox="0 0 16 3"><circle cx="1.500" cy="1.500" r="1.200" fill="#222"/><circle cx="8" cy="1.500" r="1.200" fill="#222"/><circle cx="14.500" cy="1.500" r="1.200" fill="#222"/></svg>
<svg style="left:410px;top:13px" width="11" height="11" viewBox="0 0 11 11"><path d="M0.500 0.500l10 10M10.500 0.500l-10 10" stroke="#111" stroke-width="1.500"/></svg>
<svg style="left:440px;top:14px" width="11" height="10" viewBox="0 0 11 10"><path d="M0 1h11M0 5h11M0 9h11" stroke="#9a9a9a" stroke-width="1.300"/></svg>
<div class="abs" style="left:15px;top:41px;width:433px;height:37.5px;border:1px solid #c5c9d2;border-radius:4px;background:#fff"></div>
<svg style="left:24px;top:52px" width="16" height="16" viewBox="0 0 16 16"><circle cx="6.500" cy="6.500" r="5" fill="none" stroke="#858a9e" stroke-width="2.300"/><path d="M10.500 10.500l4 4" stroke="#858a9e" stroke-width="2.600" stroke-linecap="round"/></svg>
<div class="t" style="left:45px;top:49.5px;font-size:15px;line-height:20px;color:#999">搜索成员</div>
<div class="row" style="top:99.5px"><div class="a" style="font-size:14px">富明</div><div class="n">温州知产委<span style="letter-spacing:.8px;margin-left:.8px">+</span>徐富明<b style="margin-left:.5px">(主持人, 我)</b></div><div class="s"><span style="letter-spacing:1.5px">**</span>明企业</div><svg style="left:362.500px;top:17.700px" width="19" height="19" viewBox="0 0 19 19"><circle cx="9.500" cy="9.500" r="8.300" fill="#fff" stroke="#fc8f8a" stroke-width="1.300"/><circle cx="9.500" cy="9.500" r="5.200" fill="#fd3b33"/></svg><svg style="left:394.0px;top:17.3px" width="16.0" height="20.0" viewBox="0 0 16 20" ><rect x="4.2" y="0.6" width="7.6" height="13" rx="3.8" fill="#cbcbcb"/><path d="M1.4 9.300a6.600 6.600 0 0 0 13.200 0" fill="none" stroke="#cbcbcb" stroke-width="1.300" stroke-linecap="round"/><path d="M8 16.200v3M3.800 19.300h8.400" fill="none" stroke="#cbcbcb" stroke-width="1.300" stroke-linecap="round"/><path d="M0.300 18.400L15.900 2.300" stroke="#fb5a55" stroke-width="1.400" stroke-linecap="round"/></svg><svg style="left:422px;top:18.8px" width="20" height="17" viewBox="0 0 20 17" ><rect x="0.800" y="2.800" width="12.200" height="11.400" rx="1.700" fill="#cbcbcb"/><path d="M14.200 7.200L18.200 3.400a.600 .600 0 0 1 1 .5v9.200a.600 .600 0 0 1-1 .5L14.200 9.800z" fill="#cbcbcb"/><path d="M0 15.600L13.400 1.600" stroke="#fb5a55" stroke-width="1.300" stroke-linecap="round"/></svg></div>
<div class="row" style="top:154.5px"><div class="a" style="font-size:14px">陈为</div><div class="n">陈为</div><div class="s">(联席主持人, 访客)</div><svg style="left:363.500px;top:18.500px" width="16" height="18" viewBox="0 0 16 18"><rect x="0.500" y="0.500" width="15" height="11.500" rx="2" fill="#d0d0d0"/><rect x="3" y="14" width="10" height="2.500" rx="1" fill="#d0d0d0"/><path d="M4 9.500c.5-2.500 2-3.800 4.500-3.800V4l3.500 3-3.500 3V8.300c-2 0-3.200.3-4.500 1.200z" fill="#fff"/></svg><svg style="left:394.0px;top:17.3px" width="16.0" height="20.0" viewBox="0 0 16 20" ><rect x="4.2" y="0.6" width="7.6" height="13" rx="3.8" fill="#c9c9c9"/><path d="M1.4 9.300a6.600 6.600 0 0 0 13.200 0" fill="none" stroke="#c9c9c9" stroke-width="1.300" stroke-linecap="round"/><path d="M8 16.200v3M3.800 19.300h8.400" fill="none" stroke="#c9c9c9" stroke-width="1.300" stroke-linecap="round"/><path d="M4.200 5.500h7.600v4.300a3.800 3.800 0 0 1-7.600 0z" fill="#5cf54a"/></svg><svg style="left:422px;top:18.8px" width="20" height="17" viewBox="0 0 20 17" ><rect x="0.800" y="2.800" width="12.200" height="11.400" rx="1.700" fill="#cbcbcb"/><path d="M14.200 7.200L18.200 3.400a.600 .600 0 0 1 1 .5v9.200a.600 .600 0 0 1-1 .5L14.200 9.800z" fill="#cbcbcb"/></svg></div>
<div class="row" style="top:209.5px"><div class="a" style="background:#ddd"><svg style="left:0;top:0" width="38" height="38" viewBox="0 0 65 65"><g filter="url(#pb)"><rect x="-3" y="-3" width="71" height="71" fill="#8c887c"/><rect x="-3" y="-3" width="40" height="24" fill="#aaa596"/><path d="M6 -3v22M12 -3v22M18 -3v22M24 -3v22M30 -3v22" stroke="#7d796d" stroke-width="1.6"/><rect x="-3" y="19" width="29" height="50" fill="#e9e9e7"/><path d="M2 25h12" stroke="#8a8a8a" stroke-width="1.5"/><path d="M-3 38h9l12 30H-3z" fill="#c24a3a"/><path d="M2 38h4l12 30h-5z" fill="#3a3a44"/><rect x="24" y="7" width="44" height="46" fill="#2f3a48"/><path d="M24 7h44M24.800 7v26" stroke="#171b22" stroke-width="2"/><path d="M42 30h20M44 36h18M46 42h16" stroke="#5a6878" stroke-width="1.2"/><path d="M19 68c-1-16 1-28 7-32l8-4h7l9 4c6 4 9 12 8 32z" fill="#7d8077"/><path d="M27 40c3 8 4 16 3 26M46 40c2 8 2 14 1 22" stroke="#5f6259" stroke-width="1.5" fill="none"/><ellipse cx="35.500" cy="19.500" rx="6.300" ry="8" fill="#c9a58f"/><path d="M29 17c-.5-6 2.500-9 6.500-9s7 3 6.500 8.500c-2-3-5-4-8-3.500-2 .3-4 1.800-5 4z" fill="#2a2623"/><rect x="32" y="26" width="2.500" height="16" rx="1" fill="#1c1c1e"/><ellipse cx="32" cy="36" rx="3.300" ry="4" fill="#c29a86"/><ellipse cx="45" cy="49" rx="3.500" ry="3" fill="#c9a08c"/><path d="M28 63h22" stroke="#2a2d3a" stroke-width="2"/></g></svg></div><div class="n">黄润生</div><div class="s">(联席主持人, 访客)</div><svg style="left:394.0px;top:17.3px" width="16.0" height="20.0" viewBox="0 0 16 20" ><rect x="4.2" y="0.6" width="7.6" height="13" rx="3.8" fill="#cbcbcb"/><path d="M1.4 9.300a6.600 6.600 0 0 0 13.200 0" fill="none" stroke="#cbcbcb" stroke-width="1.300" stroke-linecap="round"/><path d="M8 16.200v3M3.800 19.300h8.400" fill="none" stroke="#cbcbcb" stroke-width="1.300" stroke-linecap="round"/><path d="M0.300 18.400L15.900 2.300" stroke="#fb5a55" stroke-width="1.400" stroke-linecap="round"/></svg><svg style="left:422px;top:18.8px" width="20" height="17" viewBox="0 0 20 17" ><rect x="0.800" y="2.800" width="12.200" height="11.400" rx="1.700" fill="#cbcbcb"/><path d="M14.200 7.200L18.200 3.400a.600 .600 0 0 1 1 .5v9.200a.600 .600 0 0 1-1 .5L14.200 9.800z" fill="#cbcbcb"/><path d="M0 15.600L13.400 1.600" stroke="#fb5a55" stroke-width="1.300" stroke-linecap="round"/></svg></div>
<div class="row" style="top:264.5px"><div class="a" style="background:#ddd"><svg style="left:0;top:0" width="38" height="38" viewBox="0 0 65 65"><g filter="url(#pb)"><rect x="-3" y="-3" width="71" height="71" fill="url(#gwa)"/><path d="M4 68c1-12 6-15 14-18l10-4h8l12 5c8 3 12 6 13 17z" fill="#1f2747"/><path d="M21 44l5 24h14l9-25-8-4-12 0z" fill="#cdd9ee"/><path d="M26 50l4-2 4 3-1 17h-7l-1-10z" fill="#232e5a"/><path d="M26.500 54l6 3M26 60l6.500 3" stroke="#c7d0e6" stroke-width="1.300"/><path d="M35 49l12-8 6 6-12 21h-8z" fill="#232b4e"/><ellipse cx="30.500" cy="27" rx="12.500" ry="16.500" fill="#e0b8a2"/><ellipse cx="43.500" cy="28" rx="2" ry="4" fill="#d4a890"/><path d="M18 25c-2-14 4-21 13-21s15 6 12.500 21c-1-6-3-10-6-12-5 1-11 1-15-.5-2.500 3-4 7-4.500 12.500z" fill="#1f1a19"/><path d="M19 23.500h9.500M32 23.500h10" stroke="#5c4a44" stroke-width="1.100"/><path d="M24 35.500c2 1 5 1 7 0" stroke="#b67a72" stroke-width="1.300" fill="none"/></g></svg></div><div class="n">王延军</div><div class="s">(联席主持人, 访客)</div><svg style="left:394.0px;top:17.3px" width="16.0" height="20.0" viewBox="0 0 16 20" ><rect x="4.2" y="0.6" width="7.6" height="13" rx="3.8" fill="#cbcbcb"/><path d="M1.4 9.300a6.600 6.600 0 0 0 13.200 0" fill="none" stroke="#cbcbcb" stroke-width="1.300" stroke-linecap="round"/><path d="M8 16.200v3M3.800 19.300h8.400" fill="none" stroke="#cbcbcb" stroke-width="1.300" stroke-linecap="round"/><path d="M0.300 18.400L15.900 2.300" stroke="#fb5a55" stroke-width="1.400" stroke-linecap="round"/></svg><svg style="left:422px;top:18.8px" width="20" height="17" viewBox="0 0 20 17" ><rect x="0.800" y="2.800" width="12.200" height="11.400" rx="1.700" fill="#cbcbcb"/><path d="M14.200 7.200L18.200 3.400a.600 .600 0 0 1 1 .5v9.200a.600 .600 0 0 1-1 .5L14.200 9.800z" fill="#cbcbcb"/><path d="M0 15.600L13.400 1.600" stroke="#fb5a55" stroke-width="1.300" stroke-linecap="round"/></svg></div>
<div class="row" style="top:319.5px"><div class="a" style="background:#ddd"><svg style="left:0;top:0" width="38" height="38" viewBox="0 0 65 65"><g filter="url(#pb)"><rect x="-3" y="-3" width="71" height="71" fill="#f3efe9"/><rect x="-3" y="-3" width="10" height="71" fill="#e6e6e8"/><path d="M6 2c8-3 16-2 22 2l-6 8-10 4-8 10z" fill="#bdb8b0"/><path d="M8 6l8 2M12 12l-4 6M18 4l4 4" stroke="#8a857c" stroke-width="1.500"/><path d="M40 26c8-3 16-1 25 4v14c-8 2-16 0-22-4z" fill="#d6d1ca"/><path d="M44 30l10 2M48 38l12 2M52 26l6 4" stroke="#a39e95" stroke-width="1.300"/><path d="M8 34c4-1 8 2 9 8l-3 14-8 6z" fill="#c2bcb2"/><path d="M6 50c10-2 24 3 36 8l16 10H6z" fill="#cfcac1"/><path d="M10 56l8 2M22 60l10 3M40 58l8 4M12 44l4 6" stroke="#8f8a80" stroke-width="1.400"/><path d="M19 24c2-8 8-14 18-15l10 1c3 3 3 8 1 12l-7 4c-2 5-2 12 1 19l2 10-3 8h-7l-1-12-4 12h-7l2-16c-4-7-6-15-5-23z" fill="#c8974f"/><path d="M24 30c3 6 4 14 3 22M30 26c3 7 5 16 5 26" stroke="#e0b672" stroke-width="2.500" fill="none"/><path d="M21 24l8-5M21 31l9-4M23 38l8-3M26 45l7-3M36 13l3 6M42 12l2 5M28 54l6-2M34 58l5-2" stroke="#5b3f1c" stroke-width="1.500"/><ellipse cx="43" cy="16" rx="5.500" ry="4.500" fill="#e2bb7c"/><path d="M40 14l3 1.500M45 13.500l2 1.500M41 18l5 .5" stroke="#3a2a14" stroke-width="1.200"/><path d="M46 20c2 1 3 3 2 5l-4 1z" fill="#f0e8dc"/><circle cx="57" cy="52" r="1.800" fill="#c0392b"/></g></svg></div><div class="n">吴士虎律师</div><div class="s">(访客)</div><svg style="left:394.0px;top:17.3px" width="16.0" height="20.0" viewBox="0 0 16 20" ><rect x="4.2" y="0.6" width="7.6" height="13" rx="3.8" fill="#cbcbcb"/><path d="M1.4 9.300a6.600 6.600 0 0 0 13.200 0" fill="none" stroke="#cbcbcb" stroke-width="1.300" stroke-linecap="round"/><path d="M8 16.200v3M3.800 19.300h8.400" fill="none" stroke="#cbcbcb" stroke-width="1.300" stroke-linecap="round"/><path d="M0.300 18.400L15.900 2.300" stroke="#fb5a55" stroke-width="1.400" stroke-linecap="round"/></svg><svg style="left:422px;top:18.8px" width="20" height="17" viewBox="0 0 20 17" ><rect x="0.800" y="2.800" width="12.200" height="11.400" rx="1.700" fill="#cbcbcb"/><path d="M14.200 7.200L18.200 3.400a.600 .600 0 0 1 1 .5v9.200a.600 .600 0 0 1-1 .5L14.200 9.800z" fill="#cbcbcb"/></svg></div>
<div class="row" style="top:374.5px"><div class="a" style="background:#ddd"><svg style="left:0;top:0" width="38" height="38" viewBox="0 0 65 65"><g filter="url(#pb)"><rect x="-3" y="-3" width="71" height="71" fill="#252f31"/><path d="M4 68c0-14 4-24 12-27l10-5h8l12 6c8 4 12 12 13 26z" fill="#15171c"/><path d="M25 38l4 30h8l5-29-8-4z" fill="#c7d3de"/><path d="M30 40l3-1.500 3 2-1 27h-5z" fill="#243a8a"/><ellipse cx="36" cy="17" rx="8" ry="10.500" fill="#d6ac96"/><path d="M27 15c-1-9 3-13 9.500-13s10 4 8.500 12c-2-4-5-6-9-6s-7 2-9 7z" fill="#141212"/><path d="M29 14.500h14" stroke="#2a2422" stroke-width="1.400"/><path d="M36 27c4-1 8 2 8 6l6 9-6 4-8-12z" fill="#d0a58f"/><path d="M43 40l8-3 4 8-8 4z" fill="#aabacd"/></g></svg></div><div class="n">20温州戴增收</div><div class="s">(访客)</div><svg style="left:394.0px;top:17.3px" width="16.0" height="20.0" viewBox="0 0 16 20" ><rect x="4.2" y="0.6" width="7.6" height="13" rx="3.8" fill="#cbcbcb"/><path d="M1.4 9.300a6.600 6.600 0 0 0 13.200 0" fill="none" stroke="#cbcbcb" stroke-width="1.300" stroke-linecap="round"/><path d="M8 16.200v3M3.800 19.300h8.400" fill="none" stroke="#cbcbcb" stroke-width="1.300" stroke-linecap="round"/><path d="M0.300 18.400L15.900 2.300" stroke="#fb5a55" stroke-width="1.400" stroke-linecap="round"/></svg><svg style="left:422px;top:18.8px" width="20" height="17" viewBox="0 0 20 17" ><rect x="0.800" y="2.800" width="12.200" height="11.400" rx="1.700" fill="#cbcbcb"/><path d="M14.200 7.200L18.200 3.400a.600 .600 0 0 1 1 .5v9.200a.600 .600 0 0 1-1 .5L14.200 9.800z" fill="#cbcbcb"/><path d="M0 15.600L13.400 1.600" stroke="#fb5a55" stroke-width="1.300" stroke-linecap="round"/></svg></div>
<div class="row" style="top:429.5px"><div class="a" style="font-size:15px">A</div><div class="n">A<span style="letter-spacing:2px">~~~</span></div><div class="s">(访客)</div><svg style="left:394.0px;top:17.3px" width="16.0" height="20.0" viewBox="0 0 16 20" ><rect x="4.2" y="0.6" width="7.6" height="13" rx="3.8" fill="#cbcbcb"/><path d="M1.4 9.300a6.600 6.600 0 0 0 13.200 0" fill="none" stroke="#cbcbcb" stroke-width="1.300" stroke-linecap="round"/><path d="M8 16.200v3M3.800 19.300h8.400" fill="none" stroke="#cbcbcb" stroke-width="1.300" stroke-linecap="round"/><path d="M0.300 18.400L15.900 2.300" stroke="#fb5a55" stroke-width="1.400" stroke-linecap="round"/></svg><svg style="left:422px;top:18.8px" width="20" height="17" viewBox="0 0 20 17" ><rect x="0.800" y="2.800" width="12.200" height="11.400" rx="1.700" fill="#cbcbcb"/><path d="M14.200 7.200L18.200 3.400a.600 .600 0 0 1 1 .5v9.200a.600 .600 0 0 1-1 .5L14.200 9.800z" fill="#cbcbcb"/><path d="M0 15.600L13.400 1.600" stroke="#fb5a55" stroke-width="1.300" stroke-linecap="round"/></svg></div>
<div class="row" style="top:484.5px"><div class="a" style="background:#ddd"><svg style="left:0;top:0" width="38" height="38" viewBox="0 0 65 65"><g filter="url(#pb2)"><rect x="-3" y="-3" width="71" height="71" fill="url(#gcs)"/><path d="M-3 33c8-3 16-2 24-3s14-1 22 1 14 1 25 3v6H-3z" fill="#9aabc6"/><path d="M-3 41h20l10 1 12-1 14 2 15 1v4H-3z" fill="#2f4560"/><rect x="-3" y="47" width="71" height="22" fill="#63789a" opacity=".7"/></g></svg></div><div class="n">C.sir</div><div class="s">(访客)</div><svg style="left:394.0px;top:17.3px" width="16.0" height="20.0" viewBox="0 0 16 20" ><rect x="4.2" y="0.6" width="7.6" height="13" rx="3.8" fill="#cbcbcb"/><path d="M1.4 9.300a6.600 6.600 0 0 0 13.200 0" fill="none" stroke="#cbcbcb" stroke-width="1.300" stroke-linecap="round"/><path d="M8 16.200v3M3.800 19.300h8.400" fill="none" stroke="#cbcbcb" stroke-width="1.300" stroke-linecap="round"/><path d="M0.300 18.400L15.900 2.300" stroke="#fb5a55" stroke-width="1.400" stroke-linecap="round"/></svg><svg style="left:422px;top:18.8px" width="20" height="17" viewBox="0 0 20 17" ><rect x="0.800" y="2.800" width="12.200" height="11.400" rx="1.700" fill="#cbcbcb"/><path d="M14.200 7.200L18.200 3.400a.600 .600 0 0 1 1 .5v9.200a.600 .600 0 0 1-1 .5L14.200 9.800z" fill="#cbcbcb"/><path d="M0 15.600L13.400 1.600" stroke="#fb5a55" stroke-width="1.300" stroke-linecap="round"/></svg></div>
<div class="row" style="top:539.5px"><div class="a" style="background:#ddd"><svg style="left:0;top:0" width="38" height="38" viewBox="0 0 65 65"><g filter="url(#pb)"><rect x="-3" y="-3" width="71" height="71" fill="url(#gjy)"/><path d="M-3 30c20-5 40-4 71 2" stroke="#1f5a50" stroke-width="3" fill="none" opacity=".7"/><path d="M-3 41c25-3 45-3 71-1" stroke="#3fae78" stroke-width="2" fill="none" opacity=".8"/><path d="M34 44l22-3 8 4v10H34z" fill="#8a3a2a"/><path d="M34 44l22-3 8 4" stroke="#b0a8a0" stroke-width="1.500" fill="none"/><path d="M-3 48h71v20H-3z" fill="#6a3f1e"/><circle cx="10" cy="50" r="3" fill="#f0b050"/><circle cx="36" cy="49" r="3.500" fill="#ffd890"/><circle cx="22" cy="54" r="2.500" fill="#e09838"/><circle cx="47" cy="57" r="3" fill="#f6dcb0"/><circle cx="58" cy="46" r="2" fill="#f0a040"/><path d="M14 58c10-2 22-1 34 3" stroke="#d8a070" stroke-width="3" fill="none"/></g></svg></div><div class="n"><span style="letter-spacing:-1px">JY</span></div><div class="s">(访客)</div><svg style="left:394.0px;top:17.3px" width="16.0" height="20.0" viewBox="0 0 16 20" ><rect x="4.2" y="0.6" width="7.6" height="13" rx="3.8" fill="#cbcbcb"/><path d="M1.4 9.300a6.600 6.600 0 0 0 13.200 0" fill="none" stroke="#cbcbcb" stroke-width="1.300" stroke-linecap="round"/><path d="M8 16.200v3M3.800 19.300h8.400" fill="none" stroke="#cbcbcb" stroke-width="1.300" stroke-linecap="round"/><path d="M0.300 18.400L15.900 2.300" stroke="#fb5a55" stroke-width="1.400" stroke-linecap="round"/></svg><svg style="left:422px;top:18.8px" width="20" height="17" viewBox="0 0 20 17" ><rect x="0.800" y="2.800" width="12.200" height="11.400" rx="1.700" fill="#cbcbcb"/><path d="M14.200 7.200L18.200 3.400a.600 .600 0 0 1 1 .5v9.200a.600 .600 0 0 1-1 .5L14.200 9.800z" fill="#cbcbcb"/><path d="M0 15.600L13.400 1.600" stroke="#fb5a55" stroke-width="1.300" stroke-linecap="round"/></svg></div>
<div class="row" style="top:594.5px"><div class="a" style="background:#ddd"><svg style="left:0;top:0" width="38" height="38" viewBox="0 0 65 65"><g filter="url(#pb)"><rect x="-3" y="-3" width="71" height="71" fill="#dfe4e8"/><path d="M-3 22l12-10 10 4 12-12 14 4 10 10 13 8v14H-3z" fill="#9aa2ac"/><path d="M14 16l8 10M34 8l6 12M24 20l10 8" stroke="#c4cad2" stroke-width="2.500"/><path d="M36 30l14-10 18-6v26H36z" fill="#2f5a3a"/><path d="M-3 26l10 2 8 6-18 2z" fill="#4a6a4e"/><rect x="-3" y="33" width="71" height="12" fill="#3f9a88"/><path d="M10 32h24v5H10z" fill="#b9d8d0" opacity=".8"/><path d="M-3 40l20-4 24 6 27 8v18H-3z" fill="#b06a2a"/><path d="M0 41l18-3 22 6 24 8" stroke="#6a3a14" stroke-width="2" fill="none"/><path d="M6 52c12-3 24-2 34 2l16 6-6 8H10z" fill="#e8e0d8"/><path d="M8 58c10-2 24-1 36 4l8 6H12z" fill="#2a1a12"/></g></svg></div><div class="n">Kali_纪律师</div><div class="s">(访客)</div><svg style="left:394.0px;top:17.3px" width="16.0" height="20.0" viewBox="0 0 16 20" ><rect x="4.2" y="0.6" width="7.6" height="13" rx="3.8" fill="#cbcbcb"/><path d="M1.4 9.300a6.600 6.600 0 0 0 13.200 0" fill="none" stroke="#cbcbcb" stroke-width="1.300" stroke-linecap="round"/><path d="M8 16.200v3M3.800 19.300h8.400" fill="none" stroke="#cbcbcb" stroke-width="1.300" stroke-linecap="round"/><path d="M0.300 18.400L15.900 2.300" stroke="#fb5a55" stroke-width="1.400" stroke-linecap="round"/></svg><svg style="left:422px;top:18.8px" width="20" height="17" viewBox="0 0 20 17" ><rect x="0.800" y="2.800" width="12.200" height="11.400" rx="1.700" fill="#cbcbcb"/><path d="M14.200 7.200L18.200 3.400a.600 .600 0 0 1 1 .5v9.200a.600 .600 0 0 1-1 .5L14.200 9.800z" fill="#cbcbcb"/><path d="M0 15.600L13.400 1.600" stroke="#fb5a55" stroke-width="1.300" stroke-linecap="round"/></svg></div>
<div class="row" style="top:649.5px"><div class="a" style="background:#ddd"><svg style="left:0;top:0" width="38" height="38" viewBox="0 0 65 65"><g filter="url(#pb)"><rect x="-3" y="-3" width="71" height="71" fill="#e6e6ec"/><path d="M10 68c-4-20-2-46 8-58 6-6 12-9 18-9 10 1 18 8 22 20 3 12 3 30-2 47z" fill="#2a2020"/><path d="M19 40c0-16 6-26 16-28 8 1 15 10 16 24 0 14-6 26-16 28-9-1-16-10-16-24z" fill="#e8c4b4"/><path d="M17 40c-1-16 4-28 17-30-6 6-9 14-10 22-1 6-4 8-7 8zM36 10c10 2 17 12 16 28-3-2-5-8-7-14-2-6-5-10-9-14z" fill="#241a1a"/><path d="M22 35c3-1.500 6-1.500 8 0M40 35c3-1.500 6-1.500 8 0" stroke="#3a2622" stroke-width="2" fill="none"/><path d="M27 52c3 2 8 2 11 0" stroke="#d0444e" stroke-width="2.600" fill="none"/><ellipse cx="33" cy="44" rx="2" ry="1.300" fill="#d8a898"/></g></svg></div><div class="n"><span style="letter-spacing:.7px">kiky</span></div><div class="s">(访客)</div><svg style="left:394.0px;top:17.3px" width="16.0" height="20.0" viewBox="0 0 16 20" ><rect x="4.2" y="0.6" width="7.6" height="13" rx="3.8" fill="#cbcbcb"/><path d="M1.4 9.300a6.600 6.600 0 0 0 13.200 0" fill="none" stroke="#cbcbcb" stroke-width="1.300" stroke-linecap="round"/><path d="M8 16.200v3M3.800 19.300h8.400" fill="none" stroke="#cbcbcb" stroke-width="1.300" stroke-linecap="round"/><path d="M0.300 18.400L15.900 2.300" stroke="#fb5a55" stroke-width="1.400" stroke-linecap="round"/></svg><svg style="left:422px;top:18.8px" width="20" height="17" viewBox="0 0 20 17" ><rect x="0.800" y="2.800" width="12.200" height="11.400" rx="1.700" fill="#cbcbcb"/><path d="M14.200 7.200L18.200 3.400a.600 .600 0 0 1 1 .5v9.200a.600 .600 0 0 1-1 .5L14.200 9.800z" fill="#cbcbcb"/><path d="M0 15.600L13.400 1.600" stroke="#fb5a55" stroke-width="1.300" stroke-linecap="round"/></svg></div>
<div class="row" style="top:704.5px"><div class="a" style="font-size:15px">L</div><div class="abs" style="left:47px;top:33px;width:13px;height:13px;border-radius:50%;background:#f3f3f3;border:1px solid #fff"></div><div class="abs" style="left:51px;top:37px;width:2px;height:5px;background:#f56f6a"></div><div class="abs" style="left:54.500px;top:38.500px;width:2px;height:3.500px;background:#f5a09c"></div><div class="n"><span style="letter-spacing:.6px">lucky</span></div><div class="s">(访客)</div><svg style="left:394.0px;top:17.3px" width="16.0" height="20.0" viewBox="0 0 16 20" ><rect x="4.2" y="0.6" width="7.6" height="13" rx="3.8" fill="#cbcbcb"/><path d="M1.4 9.300a6.600 6.600 0 0 0 13.200 0" fill="none" stroke="#cbcbcb" stroke-width="1.300" stroke-linecap="round"/><path d="M8 16.200v3M3.800 19.300h8.400" fill="none" stroke="#cbcbcb" stroke-width="1.300" stroke-linecap="round"/><path d="M0.300 18.400L15.900 2.300" stroke="#fb5a55" stroke-width="1.400" stroke-linecap="round"/></svg><svg style="left:422px;top:18.8px" width="20" height="17" viewBox="0 0 20 17" ><rect x="0.800" y="2.800" width="12.200" height="11.400" rx="1.700" fill="#cbcbcb"/><path d="M14.200 7.200L18.200 3.400a.600 .600 0 0 1 1 .5v9.200a.600 .600 0 0 1-1 .5L14.200 9.800z" fill="#cbcbcb"/><path d="M0 15.600L13.400 1.600" stroke="#fb5a55" stroke-width="1.300" stroke-linecap="round"/></svg></div>
<div class="row" style="top:759.5px"><div class="a" style="font-size:15px">S</div><div class="n"><span style="letter-spacing:.45px">Silicon inside</span></div><div class="s">(访客)</div><svg style="left:394.0px;top:17.3px" width="16.0" height="20.0" viewBox="0 0 16 20" ><rect x="4.2" y="0.6" width="7.6" height="13" rx="3.8" fill="#cbcbcb"/><path d="M1.4 9.300a6.600 6.600 0 0 0 13.200 0" fill="none" stroke="#cbcbcb" stroke-width="1.300" stroke-linecap="round"/><path d="M8 16.200v3M3.800 19.300h8.400" fill="none" stroke="#cbcbcb" stroke-width="1.300" stroke-linecap="round"/><path d="M0.300 18.400L15.900 2.300" stroke="#fb5a55" stroke-width="1.400" stroke-linecap="round"/></svg><svg style="left:422px;top:18.8px" width="20" height="17" viewBox="0 0 20 17" ><rect x="0.800" y="2.800" width="12.200" height="11.400" rx="1.700" fill="#cbcbcb"/><path d="M14.200 7.200L18.200 3.400a.600 .600 0 0 1 1 .5v9.200a.600 .600 0 0 1-1 .5L14.200 9.800z" fill="#cbcbcb"/><path d="M0 15.600L13.400 1.600" stroke="#fb5a55" stroke-width="1.300" stroke-linecap="round"/></svg></div>
<div class="row" style="top:814.5px"><div class="a" style="background:#ddd"><svg style="left:0;top:0" width="38" height="38" viewBox="0 0 65 65"><g filter="url(#pb)"><rect x="-3" y="-3" width="71" height="71" fill="#2a4634"/><path d="M-3 -3h71v16c-10-4-20-2-30 2s-24 2-41-4z" fill="#1d2a3e"/><path d="M-3 40c8-6 14-4 18 2v10H-3z" fill="#8aa84a"/><rect x="15" y="19" width="10" height="36" fill="#c9a082"/><path d="M16 19l4-8 4 8z" fill="#8fb5a4"/><path d="M19.500 4v8" stroke="#8fb5a4" stroke-width="1.500"/><rect x="18" y="26" width="4" height="6" fill="#3a2a22"/><path d="M28 36c0-10 5-15 11-15s11 5 11 15z" fill="#9fc8b8"/><rect x="36.500" y="10" width="5" height="11" fill="#c9a898"/><path d="M35 12l4-6 4 6z" fill="#8fb5a4"/><rect x="27" y="34" width="24" height="20" fill="#d9b8a4"/><path d="M33 40v10M39 40v10M45 40v10" stroke="#5a4a44" stroke-width="2.500"/><path d="M-3 54l20-8 20 4 31-8v26H-3z" fill="#c47a5a"/><path d="M46 48l22-8v14l-20 6z" fill="#d89878"/><path d="M8 58l10-4 8 6M30 60l10-4 10 5" stroke="#7a3a2a" stroke-width="2" fill="none"/><path d="M14 66l8-8 8 8z" fill="#e8d0c0"/></g></svg></div><div class="n">sk</div><div class="s">(访客)</div><svg style="left:394.0px;top:17.3px" width="16.0" height="20.0" viewBox="0 0 16 20" ><rect x="4.2" y="0.6" width="7.6" height="13" rx="3.8" fill="#cbcbcb"/><path d="M1.4 9.300a6.600 6.600 0 0 0 13.200 0" fill="none" stroke="#cbcbcb" stroke-width="1.300" stroke-linecap="round"/><path d="M8 16.200v3M3.800 19.300h8.400" fill="none" stroke="#cbcbcb" stroke-width="1.300" stroke-linecap="round"/><path d="M0.300 18.400L15.900 2.300" stroke="#fb5a55" stroke-width="1.400" stroke-linecap="round"/></svg><svg style="left:422px;top:18.8px" width="20" height="17" viewBox="0 0 20 17" ><rect x="0.800" y="2.800" width="12.200" height="11.400" rx="1.700" fill="#cbcbcb"/><path d="M14.200 7.200L18.200 3.400a.600 .600 0 0 1 1 .5v9.200a.600 .600 0 0 1-1 .5L14.200 9.800z" fill="#cbcbcb"/><path d="M0 15.600L13.400 1.600" stroke="#fb5a55" stroke-width="1.300" stroke-linecap="round"/></svg></div>
<div class="row" style="top:869.5px"><div class="a" style="font-size:14px">律师</div><div class="n">陈紫怡律师</div><div class="s">(访客)</div><svg style="left:394.0px;top:17.3px" width="16.0" height="20.0" viewBox="0 0 16 20" ><rect x="4.2" y="0.6" width="7.6" height="13" rx="3.8" fill="#cbcbcb"/><path d="M1.4 9.300a6.600 6.600 0 0 0 13.200 0" fill="none" stroke="#cbcbcb" stroke-width="1.300" stroke-linecap="round"/><path d="M8 16.200v3M3.800 19.300h8.400" fill="none" stroke="#cbcbcb" stroke-width="1.300" stroke-linecap="round"/><path d="M0.300 18.400L15.900 2.300" stroke="#fb5a55" stroke-width="1.400" stroke-linecap="round"/></svg><svg style="left:422px;top:18.8px" width="20" height="17" viewBox="0 0 20 17" ><rect x="0.800" y="2.800" width="12.200" height="11.400" rx="1.700" fill="#cbcbcb"/><path d="M14.200 7.200L18.200 3.400a.600 .600 0 0 1 1 .5v9.200a.600 .600 0 0 1-1 .5L14.200 9.800z" fill="#cbcbcb"/><path d="M0 15.600L13.400 1.600" stroke="#fb5a55" stroke-width="1.300" stroke-linecap="round"/></svg></div>
<div class="abs" style="left:0;top:909px;width:464px;height:73px;background:#fff;border-top:1px solid #e3e5ea"></div>
<div class="btn" style="left:56px;width:110px">全体静音</div>
<div class="btn" style="left:186px;width:110px">解除全体静音</div>
<div class="btn" style="left:316px;width:90px;text-align:left;padding-left:22px;line-height:27.5px">更多<svg style="left:57px;top:12.500px" width="8" height="5" viewBox="0 0 8 5"><path d="M0 0h8L4 5z" fill="#0a6cff"/></svg></div>
<div class="abs" style="left:451px;top:663px;width:13px;height:74px;background:linear-gradient(90deg,#5a5e6c 0,#4a4e5c 25%,#4a4e5c 100%);border-radius:4px 0 0 4px"></div>
<div class="abs" style="left:456px;top:672px;width:5.500px;height:20px;background:repeating-linear-gradient(#323542 0,#323542 1.500px,#4a4e5c 1.500px,#4a4e5c 2.500px)"></div>
<div class="abs" style="left:456px;top:692px;width:5.500px;height:37px;background:linear-gradient(#e9c63f 0,#c9cc58 25%,#93cf6c 55%,#55cf98 80%,#3fd0b4 100%)"></div>
<div class="abs" style="left:456px;top:692px;width:5.500px;height:37px;background:repeating-linear-gradient(transparent 0,transparent 1.500px,#4a4e5c 1.500px,#4a4e5c 2.500px)"></div>
<div class="abs" style="left:463px;top:0;width:1px;height:982px;background:#e9e9ec"></div>
</div>
<div id="task"></div>
<svg style="left:27px;top:1035px" width="28" height="28" viewBox="0 0 28 28"><defs><linearGradient id="cl" x1="0" y1="0" x2="0" y2="1"><stop offset="0" stop-color="#f4f8fc"/><stop offset="1" stop-color="#b9d3ea"/></linearGradient></defs><path d="M7 22a5.500 5.500 0 0 1-.5-11 7.500 7.500 0 0 1 14-1.500 5.500 5.500 0 0 1 2 10.500c-1 1.500-2 2-4 2z" fill="url(#cl)"/><path d="M13.500 18.500c1.500 2.500 2.500 4 2.500 5.500a2.500 2.500 0 0 1-5 0c0-1.500 1-3 2.500-5.500z" fill="#5aa9e6"/><path d="M20 4.500c0-1.500 3.500-1.500 3.500 0l-.8 7c0 .8-1.900 .8-1.900 0z" fill="#e11d3a"/><circle cx="21.700" cy="14.800" r="1.500" fill="#e11d3a"/></svg>
<div class="t" style="left:65.500px;top:1031px;font-size:15px;line-height:20px;color:#1a1a1a;letter-spacing:-1px">19°C</div>
<div class="t" style="left:65.500px;top:1051px;font-size:15px;line-height:20px;color:#5a5a5a">小雨</div>
<div class="abs" style="left:1073px;top:1025px;width:50px;height:50px;border-radius:4px;background:#fde8e8"></div>
<div class="abs" style="left:1132px;top:1026px;width:45px;height:49px;border-radius:4px;background:#f8efee;border:1px solid #ead8d6"></div>
<div class="abs" style="left:1128.500px;top:1026px;width:44px;height:49px;border-radius:4px;background:#faf2f1;border:1px solid #e9d8d6;box-shadow:1px 0 1px rgba(120,90,90,.15)"></div>
<svg style="left:753px;top:1036px" width="29" height="29" viewBox="0 0 29 29"><defs><linearGradient id="wn" x1="0" y1="0" x2="1" y2="1"><stop offset="0" stop-color="#4cc4f4"/><stop offset="1" stop-color="#0a74d6"/></linearGradient></defs><rect x="0" y="0" width="13.700" height="13.700" rx="0.800" fill="url(#wn)"/><rect x="15.300" y="0" width="13.700" height="13.700" rx="0.800" fill="#1f9ae6"/><rect x="0" y="15.300" width="13.700" height="13.700" rx="0.800" fill="#1a8fe0"/><rect x="15.300" y="15.300" width="13.700" height="13.700" rx="0.800" fill="#0a74d6"/></svg>
<svg style="left:809.500px;top:1036px" width="27" height="27" viewBox="0 0 27 27"><defs><linearGradient id="wp" x1="0" y1="0" x2="1" y2="1"><stop offset="0" stop-color="#2a8cf6"/><stop offset="1" stop-color="#3a7cf0"/></linearGradient></defs><rect x="0.300" y="0.300" width="26.400" height="26.400" rx="3.500" fill="url(#wp)"/><path d="M4.600 8.300H22.200L16.400 20.200 13.400 14 10.400 20.200z" fill="none" stroke="#fff" stroke-width="1.700" stroke-linejoin="miter"/><path d="M9.300 8.500L13.400 17 17.500 8.500" fill="none" stroke="#fff" stroke-width="1.500"/></svg>
<svg style="left:862.500px;top:1034.500px" width="31" height="31" viewBox="0 0 31 31"><defs><linearGradient id="ed1" x1="0" y1="0.300" x2="1" y2="0.500"><stop offset="0" stop-color="#1b9de2"/><stop offset="0.550" stop-color="#35c1bf"/><stop offset="1" stop-color="#62db78"/></linearGradient><linearGradient id="ed2" x1="0" y1="0" x2="0" y2="1"><stop offset="0" stop-color="#1a86d8"/><stop offset="1" stop-color="#0f4f9f"/></linearGradient></defs><path d="M0.500 15.500C0.500 7 7 0.500 15.500 0.500 24.500 0.500 30.500 7 30.500 13.500c0 5-3.500 8-8 8-3.500 0-5.500-1.500-5.500-3 0-1 .8-1.500.8-3 0-2-2-4-5-4-4.500 0-8 3.500-8 8.500 0 5 4 9.500 10.500 10C7 30.500 0.500 24 0.500 15.500z" fill="url(#ed1)"/><path d="M0.500 15.500c0-3 1-5.500 2.500-7.500 2-2 5-3 8-2.500-3 1-6 4.500-6 9 0 5.500 4.500 9.500 10 9.500 4 0 8-2 10-5 .6-.9 1.500-.4 1.200.5-2 6-7 11-13.700 11C5.500 30.500 0.500 23.500 0.500 15.500z" fill="url(#ed2)"/><path d="M8.500 17.500c0 5 3.500 8.500 8.500 8.500 3.500 0 7-1.800 9-4.500-3 1.500-7 1.500-9.500-.5-1.500-1.200-2.200-3-1.800-5-2.500-1.500-6.200-.5-6.200 1.500z" fill="#0c4a96" opacity=".75"/></svg>
<svg style="left:917px;top:1036px" width="31" height="28" viewBox="0 0 31 28"><path d="M3 3.500c0-2.500 2.500-3.500 5-2.500l20 10.500c2.500 1.200 2.500 3.800 0 5L8 27c-2.500 1-5 0-5-2.500z" fill="#2a9af5"/><path d="M1.500 5c0-2 2-2.800 4-2l4 2v18l-4 2c-2 .8-4 0-4-2z" fill="#f9861a"/><path d="M6 5c0-1.500 1.500-2 3-1.300l16 8.300c1.800 1 1.800 3 0 4L9 24.300c-1.500.7-3 .2-3-1.300z" fill="#6fcf3a"/><path d="M11.500 9.500l9 4.500-9 4.500z" fill="#fff"/></svg>
<svg style="left:972px;top:1036px" width="31" height="28" viewBox="0 0 31 28"><path d="M13 1.500c-6.500 0-11.500 4.300-11.500 9.500 0 3 1.500 5.500 4 7.300l-1 4 4.500-2.300c1.300.3 2.600.5 4 .5 1 0 2-.1 3-.3" fill="none" stroke="#1a8cf0" stroke-width="2.600" stroke-linejoin="round"/><path d="M24.500 12c0-5.500-5-10.500-11.500-10.500" fill="none" stroke="#1a82e6" stroke-width="2.600"/><circle cx="23" cy="14.500" r="2.200" fill="#4cc24a"/><circle cx="27.500" cy="19.500" r="2.200" fill="#2a8af0"/><circle cx="23" cy="24.500" r="2.200" fill="#f5582a"/><circle cx="18.500" cy="19.500" r="2.200" fill="#f9b81a"/><circle cx="23" cy="19.500" r="2.500" fill="#f9a01a"/></svg>
<svg style="left:1027px;top:1037px" width="32" height="27" viewBox="0 0 32 27"><path d="M11.500 0.500c-6 0-11 4-11 9 0 3 1.600 5.500 4 7l-1 3.500 4-2c1.300.4 2.600.5 4 .5 6 0 11-4 11-9s-5-9-11-9z" fill="#3fc250"/><circle cx="8" cy="7" r="1.300" fill="#2a8a3a"/><circle cx="15" cy="7" r="1.300" fill="#2a8a3a"/><path d="M22.500 10.500c-5 0-9 3.300-9 7.500s4 7.500 9 7.500c1 0 2-.1 3-.4l3.500 1.700-.8-3c2-1.400 3.300-3.500 3.300-5.800 0-4.200-4-7.500-9-7.500z" fill="#ededed" stroke="#d8d4d8" stroke-width="0.600"/><circle cx="19.500" cy="16.500" r="1.100" fill="#9a9a9a"/><circle cx="25.500" cy="16.500" r="1.100" fill="#9a9a9a"/></svg>
<svg style="left:1084px;top:1036px" width="28" height="28" viewBox="0 0 28 28"><defs><linearGradient id="dt" x1="0" y1="0" x2="0" y2="1"><stop offset="0" stop-color="#2a9cf8"/><stop offset="1" stop-color="#0a6ee6"/></linearGradient></defs><rect x="0.500" y="0.500" width="27" height="27" rx="6" fill="url(#dt)"/><path d="M8 5.500c5 1.500 10 4.500 12 8 .5 1-.5 2.500-1.500 3.500l1 .5-4 6.500 1-4.500h-2.500l1.500-3c-3-.5-5.500-2-6.500-4.500l3.500 1c-2-1.500-3.500-3.500-4-5.500l4 2.500c-2-1.500-3.500-3-4.500-5z" fill="#fff"/></svg>
<svg style="left:1139px;top:1036px" width="28" height="28" viewBox="0 0 28 28"><defs><linearGradient id="tm" x1="0" y1="0" x2="0.300" y2="1"><stop offset="0" stop-color="#1a86fa"/><stop offset="1" stop-color="#0a60f0"/></linearGradient></defs><rect x="0.300" y="0.300" width="27.400" height="27.400" rx="3" fill="url(#tm)"/><path d="M3.100 15.200L8.800 8.400 14.500 14.700 10.500 19.300H5.400z" fill="#d6e4fd"/><path d="M10.500 14.700L17.400 7.800 24.900 15.200 20.300 19.800 17.400 17 14.500 19.800z" fill="#fff"/><path d="M8.800 8.400l2.900 3.200-2.900 3.300z" fill="#a9c6fa"/></svg>
<div class="abs" style="left:984px;top:1070.700px;width:8px;height:3px;border-radius:1.500px;background:#8a8a8e"></div>
<div class="abs" style="left:1039px;top:1070.700px;width:8px;height:3px;border-radius:1.500px;background:#8a8a8e"></div>
<div class="abs" style="left:1094px;top:1070.700px;width:8px;height:3px;border-radius:1.500px;background:#d62a2a"></div>
<div class="abs" style="left:1143px;top:1070.500px;width:20px;height:3px;border-radius:1.500px;background:#1479e0"></div>
<svg style="left:1562px;top:1044px" width="16" height="10" viewBox="0 0 16 10"><path d="M1 9L8 1.500 15 9" fill="none" stroke="#111" stroke-width="1.500"/></svg>
<svg style="left:1597px;top:1038px" width="16" height="24" viewBox="0 0 16 24"><rect x="5" y="1.500" width="6" height="12.500" rx="3" fill="none" stroke="#1a60c8" stroke-width="1.700"/><path d="M2 10.500a6 6 0 0 0 12 0M8 17v4.500" fill="none" stroke="#1a60c8" stroke-width="1.700" stroke-linecap="round"/></svg>
<div class="t" style="left:1636.5px;top:1039px;font-size:17px;line-height:22px;color:#f3f0f1;font-weight:normal;text-shadow:1px 0 0 #858188,-1px 0 0 #858188,0 1px 0 #858188,0 -1px 0 #858188,.7px .7px 0 #858188,-.7px -.7px 0 #858188,.7px -.7px 0 #858188,-.7px .7px 0 #858188">中</div>
<svg style="left:1681.500px;top:1039px" width="23" height="22" viewBox="0 0 38 36"><path d="M4.500 9.500L29 3.500l5 22.500L9.500 32.500z" fill="#3fb52a" stroke="#3fb52a" stroke-width="5" stroke-linejoin="round"/><path d="M28.500 10c-4-3.500-20-2-20 3.500 0 5 21 .5 21 7.500 0 5.500-15 6-20 3" fill="none" stroke="#fff" stroke-width="3.800" stroke-linecap="round"/></svg>
<svg style="left:1729px;top:1041px" width="22" height="17" viewBox="0 0 22 17"><path d="M1 6.500a14 14 0 0 1 20 0M4.500 10a9 9 0 0 1 13 0M8 13.200a4.500 4.500 0 0 1 6 0" fill="none" stroke="#111" stroke-width="1.500" stroke-linecap="round"/><circle cx="11" cy="15.300" r="1.400" fill="#111"/></svg>
<svg style="left:1759px;top:1041px" width="22" height="17" viewBox="0 0 22 17"><path d="M1.500 6h3.500l4.500-4v13l-4.500-4H1.500z" fill="none" stroke="#111" stroke-width="1.300" stroke-linejoin="round"/><path d="M12.500 5.500a4 4 0 0 1 0 6M15 3.500a7 7 0 0 1 0 10" fill="none" stroke="#111" stroke-width="1.300" stroke-linecap="round"/><path d="M17.500 1.500a10 10 0 0 1 0 14" fill="none" stroke="#aaa" stroke-width="1.200" stroke-linecap="round"/></svg>
<svg style="left:1789px;top:1041px" width="22" height="17" viewBox="0 0 22 17"><rect x="4.500" y="4" width="14" height="9.500" rx="2" fill="none" stroke="#111" stroke-width="1.400"/><rect x="6.500" y="6" width="9" height="5.500" fill="#111"/><path d="M19.500 7v3.500" stroke="#111" stroke-width="1.600"/><path d="M2 1v3M5 1v3M0.500 4h6v2.500a3 3 0 0 1-6 0zM3.500 9.500v3.500" fill="#111" stroke="#111" stroke-width="1.100"/></svg>
<div class="t" style="left:1795px;top:1030px;width:100.500px;text-align:right;font-size:15px;line-height:20px;color:#111;letter-spacing:-.2px">20:07</div>
<div class="t" style="left:1795px;top:1050px;width:100.500px;text-align:right;font-size:15px;line-height:20px;color:#111;letter-spacing:0">2022/5/12</div>
<div id="ime"></div>
<svg style="left:1712px;top:982px" width="38" height="36" viewBox="0 0 38 36"><path d="M4.500 9.500L29 3.500l5 22.500L9.500 32.500z" fill="#3fb52a" stroke="#3fb52a" stroke-width="5" stroke-linejoin="round"/><path d="M28.500 10c-4-3.500-20-2-20 3.500 0 5 21 .5 21 7.500 0 5.500-15 6-20 3" fill="none" stroke="#fff" stroke-width="3.600" stroke-linecap="round"/></svg>
<div class="t" style="left:1753px;top:990px;font-size:21px;line-height:24px;color:#474a5a;font-weight:bold">五</div>
<svg style="left:1783px;top:993px" width="18" height="18" viewBox="0 0 18 18"><path d="M11 0.500a9 9 0 1 1-10 13c7 1 12-5 10-13z" fill="#474a5a"/></svg>
<svg style="left:1811px;top:993px" width="16" height="18" viewBox="0 0 16 18"><circle cx="3.500" cy="4" r="2.300" fill="none" stroke="#474a5a" stroke-width="1.500"/><path d="M11.500 8.500a2 2 0 1 1 2 2c0 2-1 3.500-3 4.500 1-1.200 1.500-2.500 1.300-4z" fill="#474a5a" stroke="#474a5a" stroke-width="1"/></svg>
<svg style="left:1836px;top:994px" width="21" height="15" viewBox="0 0 21 15"><rect x="0.300" y="0.300" width="20.400" height="14.400" rx="1.500" fill="#474a5a"/><path d="M3 4h2M6.500 4h2M10 4h2M13.500 4h2M16.500 4h1.500M3 7.200h2M6.500 7.200h2M10 7.200h2M13.500 7.200h2M16.500 7.200h1.500" stroke="#eef1f6" stroke-width="1.700"/><path d="M3.500 11h14" stroke="#eef1f6" stroke-width="1.700"/></svg>
<svg style="left:1867px;top:993px" width="17" height="18" viewBox="0 0 17 18"><circle cx="8.500" cy="4.500" r="4" fill="#474a5a"/><path d="M0.500 14c0-3.500 3-5.500 8-5.500s8 2 8 5.500c-1.500.5-3 .8-4 .8l-1.500 2.700h-5L4.500 14.800c-1 0-2.500-.3-4-.8z" fill="#474a5a"/></svg>
<svg style="left:1891px;top:993px" width="18" height="18" viewBox="0 0 18 18"><circle cx="4.700" cy="4.700" r="3.900" fill="#474a5a"/><circle cx="13.300" cy="4.700" r="3" fill="none" stroke="#474a5a" stroke-width="1.900"/><circle cx="4.700" cy="13.300" r="3.900" fill="#474a5a"/><circle cx="13.300" cy="13.300" r="3.900" fill="#474a5a"/><rect x="7" y="7" width="4" height="4" fill="#474a5a"/></svg>
</div>
</body>
</html>
